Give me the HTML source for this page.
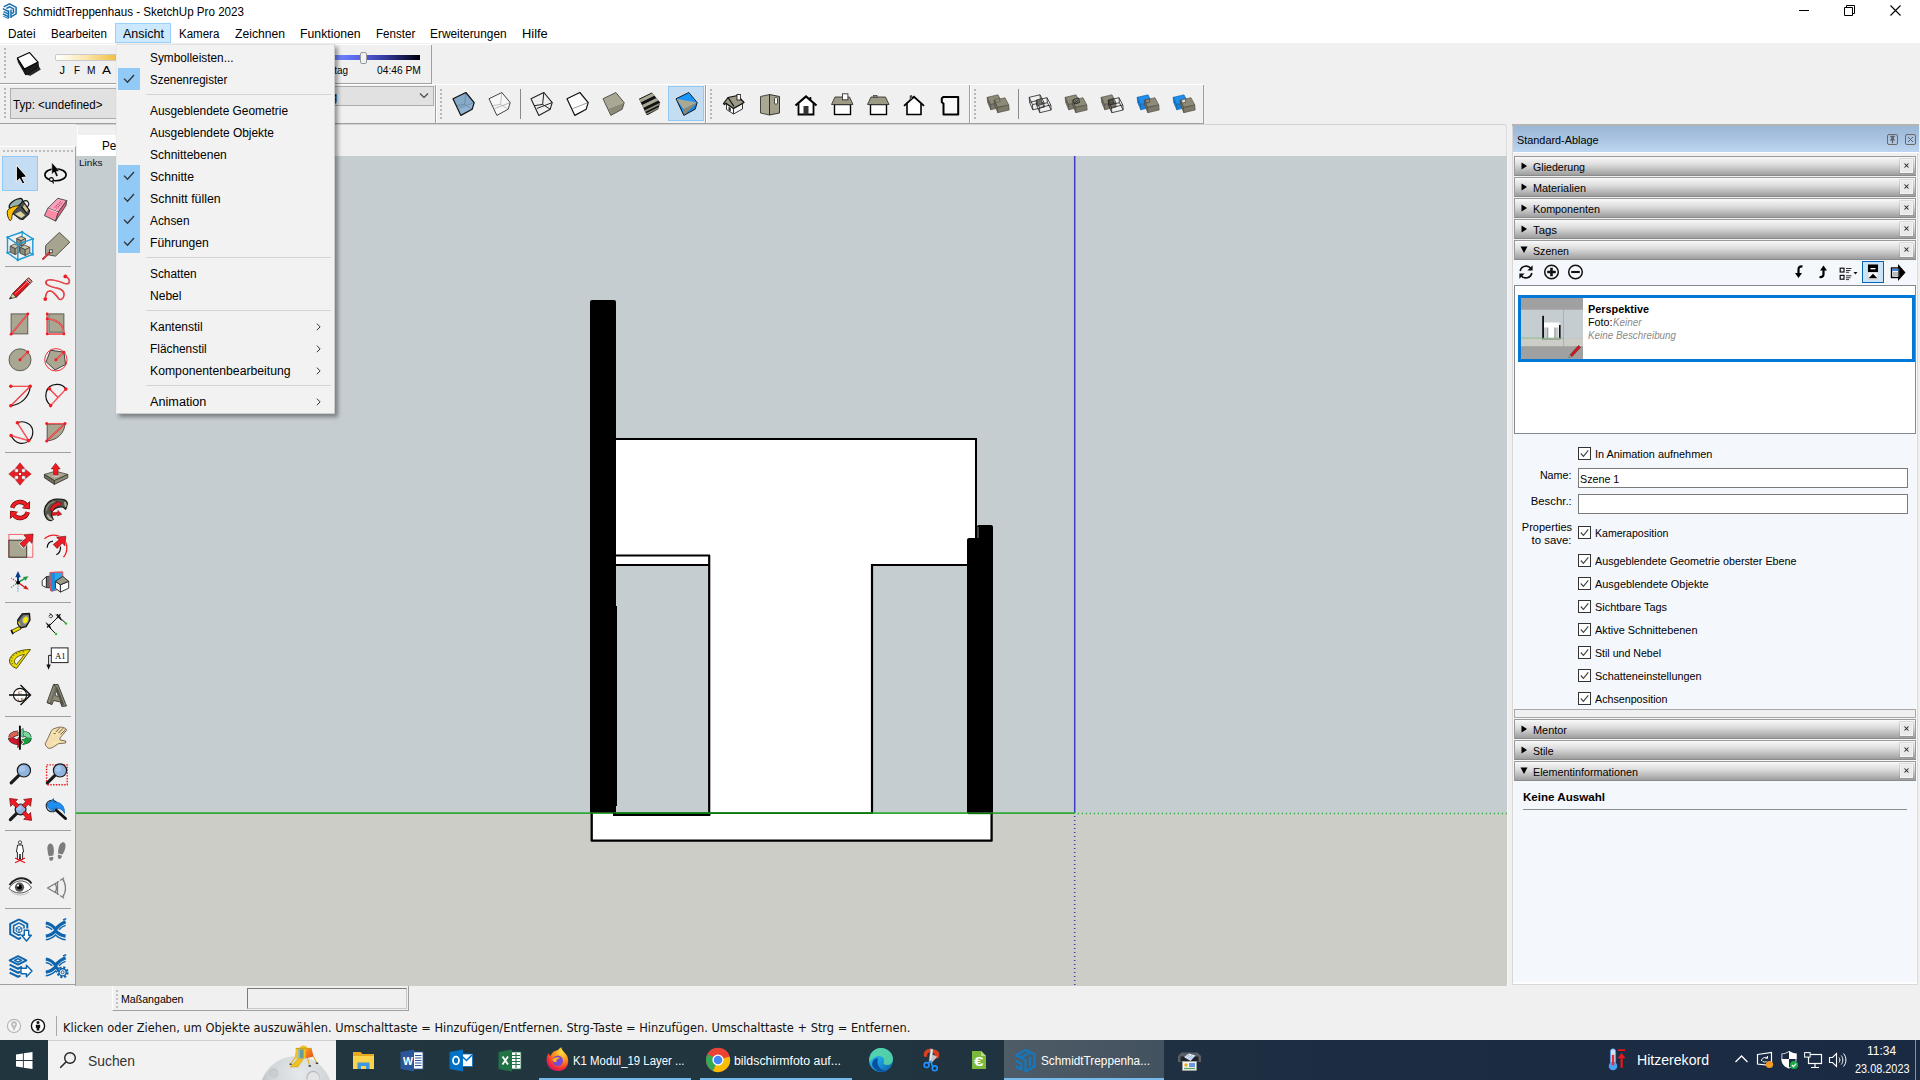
<!DOCTYPE html>
<html lang="de"><head><meta charset="utf-8"><title>SchmidtTreppenhaus - SketchUp Pro 2023</title>
<style>
html,body{margin:0;padding:0;}
body{width:1920px;height:1080px;overflow:hidden;background:#f0f0f0;position:relative;font-family:"Liberation Sans",sans-serif;font-size:12px;color:#000;}
svg{display:block;overflow:visible;}
span{display:block;}
</style></head><body>
<!-- p01_base.py -->
<div style="position:absolute;left:0px;top:0px;width:1920px;height:43px;background:#fff;"></div>
<svg style="position:absolute;left:2.2px;top:2.8px;" width="15" height="16" viewBox="0 0 15 16"><g fill="none" stroke="#1a6fae" stroke-width="1.55" stroke-linejoin="miter">
<path d="M1.7 3.9 L7.5 0.9 L14.1 4.4 V10.9 L9.3 13.7"/><path d="M4.4 5.5 L7.6 3.8 L11.5 5.9 V9.6 L9.6 10.7"/>
<path d="M9 6.6 V15"/><path d="M6.6 7.4 V15.2"/>
<path d="M0.8 5.6 L6.6 8.5"/><path d="M1.6 8.6 L6.6 11.1"/><path d="M0.9 10.9 L6.6 13.8"/><path d="M1.2 13.2 L6.6 15.6" stroke-width="1"/></g></svg>
<span style="position:absolute;top:6.44px;font-size:12px;line-height:12px;white-space:pre;color:#000;font-family:'Liberation Sans',sans-serif;left:22.50px;transform-origin:0 0;transform:scaleX(0.9678);">SchmidtTreppenhaus - SketchUp Pro 2023</span>
<div style="position:absolute;left:1799px;top:10px;width:10px;height:1px;background:#000;"></div>
<svg style="position:absolute;left:1843px;top:4px;" width="13" height="13" viewBox="0 0 13 13"><path d="M1.5 3.5h8v8h-8z M3.5 3.5v-2h8v8h-2" fill="none" stroke="#000" stroke-width="1"/></svg>
<svg style="position:absolute;left:1889px;top:4px;" width="13" height="13" viewBox="0 0 13 13"><path d="M1.5 1.5l10 10M11.5 1.5l-10 10" fill="none" stroke="#000" stroke-width="1.1"/></svg>
<div style="position:absolute;left:115px;top:23px;width:56px;height:20px;background:#cce8ff;box-sizing:border-box;border:1px solid #99d1ff;"></div>
<span style="position:absolute;top:27.94px;font-size:12px;line-height:12px;white-space:pre;color:#000;font-family:'Liberation Sans',sans-serif;left:8.00px;transform-origin:0 0;transform:scaleX(0.9816);">Datei</span>
<span style="position:absolute;top:27.94px;font-size:12px;line-height:12px;white-space:pre;color:#000;font-family:'Liberation Sans',sans-serif;left:51.00px;transform-origin:0 0;transform:scaleX(0.9648);">Bearbeiten</span>
<span style="position:absolute;top:27.94px;font-size:12px;line-height:12px;white-space:pre;color:#000;font-family:'Liberation Sans',sans-serif;left:122.50px;transform-origin:0 0;transform:scaleX(1.0419);">Ansicht</span>
<span style="position:absolute;top:27.94px;font-size:12px;line-height:12px;white-space:pre;color:#000;font-family:'Liberation Sans',sans-serif;left:178.90px;transform-origin:0 0;transform:scaleX(0.9591);">Kamera</span>
<span style="position:absolute;top:27.94px;font-size:12px;line-height:12px;white-space:pre;color:#000;font-family:'Liberation Sans',sans-serif;left:234.50px;transform-origin:0 0;transform:scaleX(1.0128);">Zeichnen</span>
<span style="position:absolute;top:27.94px;font-size:12px;line-height:12px;white-space:pre;color:#000;font-family:'Liberation Sans',sans-serif;left:299.50px;transform-origin:0 0;transform:scaleX(1.0223);">Funktionen</span>
<span style="position:absolute;top:27.94px;font-size:12px;line-height:12px;white-space:pre;color:#000;font-family:'Liberation Sans',sans-serif;left:375.50px;transform-origin:0 0;transform:scaleX(0.9660);">Fenster</span>
<span style="position:absolute;top:27.94px;font-size:12px;line-height:12px;white-space:pre;color:#000;font-family:'Liberation Sans',sans-serif;left:429.50px;transform-origin:0 0;transform:scaleX(0.9912);">Erweiterungen</span>
<span style="position:absolute;top:27.94px;font-size:12px;line-height:12px;white-space:pre;color:#000;font-family:'Liberation Sans',sans-serif;left:521.80px;transform-origin:0 0;transform:scaleX(1.0705);">Hilfe</span>
<!-- p02_toolbars.py -->
<div style="position:absolute;left:0px;top:44px;width:432px;height:1px;background:#fff;"></div>
<div style="position:absolute;left:0px;top:83px;width:432px;height:1px;background:#a0a0a0;"></div>
<div style="position:absolute;left:431px;top:45px;width:1px;height:39px;background:#a0a0a0;"></div>
<svg style="position:absolute;left:4px;top:48px;" width="3" height="32" viewBox="0 0 3 32"><rect x="0" y="0" width="2" height="2" fill="#b8b8b8"/><rect x="0" y="4" width="2" height="2" fill="#b8b8b8"/><rect x="0" y="8" width="2" height="2" fill="#b8b8b8"/><rect x="0" y="12" width="2" height="2" fill="#b8b8b8"/><rect x="0" y="16" width="2" height="2" fill="#b8b8b8"/><rect x="0" y="20" width="2" height="2" fill="#b8b8b8"/><rect x="0" y="24" width="2" height="2" fill="#b8b8b8"/><rect x="0" y="28" width="2" height="2" fill="#b8b8b8"/></svg>
<svg style="position:absolute;left:16px;top:51px;" width="26" height="26" viewBox="0 0 26 26"><polygon points="9.6,23.7 14.4,24.8 24.8,18.6 22.3,14.5" fill="#262626"/><polygon points="8.4,18.2 22.1,11.1 22.6,15.6 9.6,23.9" fill="#1c1c1c" stroke="#000" stroke-width="0.6"/><polygon points="1.2,7.1 8.4,18.2 9.6,23.9 2.4,11.5" fill="#222" stroke="#000" stroke-width="0.6"/><polygon points="1.4,7.1 13.6,1.6 22.0,11.1 8.4,18.1" fill="#fdfdfd" stroke="#000" stroke-width="1.1" stroke-linejoin="round"/></svg>
<div style="position:absolute;left:55px;top:54px;width:120px;height:7px;box-sizing:border-box;border:1px solid #c9c9c9;border-radius:2px;background:linear-gradient(90deg,#ffffff 0%,#fbe7b0 25%,#f6c85a 45%,#f0b020 60%);"></div>
<span style="position:absolute;top:65.29px;font-size:11px;line-height:11px;white-space:pre;color:#000;font-family:'Liberation Sans',sans-serif;left:59.50px;transform-origin:0 0;">J</span>
<span style="position:absolute;top:65.29px;font-size:11px;line-height:11px;white-space:pre;color:#000;font-family:'Liberation Sans',sans-serif;left:73.50px;transform-origin:0 0;transform:scaleX(0.8929);">F</span>
<span style="position:absolute;top:65.29px;font-size:11px;line-height:11px;white-space:pre;color:#000;font-family:'Liberation Sans',sans-serif;left:86.50px;transform-origin:0 0;transform:scaleX(0.9276);">M</span>
<span style="position:absolute;top:65.29px;font-size:11px;line-height:11px;white-space:pre;color:#000;font-family:'Liberation Sans',sans-serif;left:101.50px;transform-origin:0 0;transform:scaleX(1.2266);">A</span>
<div style="position:absolute;left:300px;top:55px;width:120px;height:5px;background:linear-gradient(90deg,#9fb0ff 0%,#6878f8 38%,#5560e0 52%,#3a40a8 68%,#1c1f5c 84%,#000008 100%);"></div>
<div style="position:absolute;left:360px;top:52px;width:7px;height:12px;background:#f2f2f2;box-sizing:border-box;border:1px solid #9a9a9a;border-radius:2px;"></div>
<span style="position:absolute;top:65.29px;font-size:11px;line-height:11px;white-space:pre;color:#000;font-family:'Liberation Sans',sans-serif;left:320.50px;transform-origin:0 0;transform:scaleX(0.9013);">Mittag</span>
<span style="position:absolute;top:65.29px;font-size:11px;line-height:11px;white-space:pre;color:#000;font-family:'Liberation Sans',sans-serif;left:377.10px;transform-origin:0 0;transform:scaleX(0.9302);">04:46 PM</span>
<div style="position:absolute;left:0px;top:84px;width:1204px;height:1px;background:#fff;"></div>
<div style="position:absolute;left:0px;top:123px;width:1204px;height:1px;background:#a0a0a0;"></div>
<svg style="position:absolute;left:4px;top:88px;" width="3" height="32" viewBox="0 0 3 32"><rect x="0" y="0" width="2" height="2" fill="#b8b8b8"/><rect x="0" y="4" width="2" height="2" fill="#b8b8b8"/><rect x="0" y="8" width="2" height="2" fill="#b8b8b8"/><rect x="0" y="12" width="2" height="2" fill="#b8b8b8"/><rect x="0" y="16" width="2" height="2" fill="#b8b8b8"/><rect x="0" y="20" width="2" height="2" fill="#b8b8b8"/><rect x="0" y="24" width="2" height="2" fill="#b8b8b8"/><rect x="0" y="28" width="2" height="2" fill="#b8b8b8"/></svg>
<div style="position:absolute;left:10px;top:88px;width:320px;height:31px;background:#e1e1e1;box-sizing:border-box;border:1px solid #adadad;"></div>
<span style="position:absolute;top:99.14px;font-size:12px;line-height:12px;white-space:pre;color:#000;font-family:'Liberation Sans',sans-serif;left:13.00px;transform-origin:0 0;transform:scaleX(0.9650);">Typ: &lt;undefined&gt;</span>
<div style="position:absolute;left:250px;top:86px;width:184px;height:20px;background:#e1e1e1;box-sizing:border-box;border:1px solid #adadad;"></div>
<span style="position:absolute;top:90.94px;font-size:12px;line-height:12px;white-space:pre;color:#000;font-family:'Liberation Sans',sans-serif;left:330.50px;transform-origin:0 0;">g</span>
<svg style="position:absolute;left:419px;top:92px;" width="10" height="8" viewBox="0 0 10 8"><path d="M1 1.5 L5 5.5 L9 1.5" fill="none" stroke="#444" stroke-width="1.1"/></svg>
<div style="position:absolute;left:435px;top:85px;width:1px;height:38px;background:#a0a0a0;"></div>
<div style="position:absolute;left:705px;top:85px;width:1px;height:38px;background:#a0a0a0;"></div>
<div style="position:absolute;left:969px;top:85px;width:1px;height:38px;background:#a0a0a0;"></div>
<div style="position:absolute;left:1203px;top:85px;width:1px;height:38px;background:#a0a0a0;"></div>
<div style="position:absolute;left:436px;top:85px;width:1px;height:38px;background:#fff;"></div>
<div style="position:absolute;left:706px;top:85px;width:1px;height:38px;background:#fff;"></div>
<div style="position:absolute;left:970px;top:85px;width:1px;height:38px;background:#fff;"></div>
<svg style="position:absolute;left:440px;top:89px;" width="3" height="31" viewBox="0 0 3 31"><rect x="0" y="0" width="2" height="2" fill="#b8b8b8"/><rect x="0" y="4" width="2" height="2" fill="#b8b8b8"/><rect x="0" y="8" width="2" height="2" fill="#b8b8b8"/><rect x="0" y="12" width="2" height="2" fill="#b8b8b8"/><rect x="0" y="16" width="2" height="2" fill="#b8b8b8"/><rect x="0" y="20" width="2" height="2" fill="#b8b8b8"/><rect x="0" y="24" width="2" height="2" fill="#b8b8b8"/><rect x="0" y="28" width="2" height="2" fill="#b8b8b8"/></svg>
<svg style="position:absolute;left:710px;top:89px;" width="3" height="31" viewBox="0 0 3 31"><rect x="0" y="0" width="2" height="2" fill="#b8b8b8"/><rect x="0" y="4" width="2" height="2" fill="#b8b8b8"/><rect x="0" y="8" width="2" height="2" fill="#b8b8b8"/><rect x="0" y="12" width="2" height="2" fill="#b8b8b8"/><rect x="0" y="16" width="2" height="2" fill="#b8b8b8"/><rect x="0" y="20" width="2" height="2" fill="#b8b8b8"/><rect x="0" y="24" width="2" height="2" fill="#b8b8b8"/><rect x="0" y="28" width="2" height="2" fill="#b8b8b8"/></svg>
<svg style="position:absolute;left:974px;top:89px;" width="3" height="31" viewBox="0 0 3 31"><rect x="0" y="0" width="2" height="2" fill="#b8b8b8"/><rect x="0" y="4" width="2" height="2" fill="#b8b8b8"/><rect x="0" y="8" width="2" height="2" fill="#b8b8b8"/><rect x="0" y="12" width="2" height="2" fill="#b8b8b8"/><rect x="0" y="16" width="2" height="2" fill="#b8b8b8"/><rect x="0" y="20" width="2" height="2" fill="#b8b8b8"/><rect x="0" y="24" width="2" height="2" fill="#b8b8b8"/><rect x="0" y="28" width="2" height="2" fill="#b8b8b8"/></svg>
<div style="position:absolute;left:668px;top:86px;width:36px;height:35px;background:#c4ddf3;box-sizing:border-box;border:1px solid #90c8f6;"></div>
<svg style="position:absolute;left:451.4px;top:91px;" width="24" height="24" viewBox="0 0 24 24"><polygon points="2.00,7.75 14.85,1.50 23.20,11.60 21.20,18.20 9.85,24.40" fill="#8fb3d0"/><polygon points="2.00,7.75 14.85,1.50 23.20,11.60 7.80,17.50" fill="#86aac8"/><path d="M14.85,1.50 L13.60,13.40 L21.20,18.20 M13.60,13.40 L5.40,14.70" stroke="#5d7f9c" stroke-width="0.7" fill="none"/><path d="M7.80,17.50 L23.20,11.60" stroke="#6d8fab" stroke-width="0.8" fill="none"/><polygon points="2.00,7.75 14.85,1.50 23.20,11.60 21.20,18.20 9.85,24.40" fill="none" stroke="#111" stroke-width="1.2" stroke-linejoin="round"/></svg>
<svg style="position:absolute;left:487.4px;top:91px;" width="24" height="24" viewBox="0 0 24 24"><polygon points="2.00,7.75 14.85,1.50 23.20,11.60 21.20,18.20 9.85,24.40" fill="#f7f7f7"/><path d="M14.85,1.50 L13.60,13.40 L21.20,18.20 M13.60,13.40 L5.40,14.70" stroke="#aaa" stroke-width="0.7" fill="none"/><path d="M7.80,17.50 L23.20,11.60" stroke="#999" stroke-width="0.7" fill="none"/><polygon points="2.00,7.75 14.85,1.50 23.20,11.60 21.20,18.20 9.85,24.40" fill="none" stroke="#444" stroke-width="1" stroke-linejoin="round"/></svg>
<svg style="position:absolute;left:529.3px;top:91px;" width="24" height="24" viewBox="0 0 24 24"><path d="M14.85,1.50 L13.60,13.40 L21.20,18.20 M13.60,13.40 L5.40,14.70" stroke="#222" stroke-width="1" fill="none"/><path d="M7.80,17.50 L23.20,11.60" stroke="#222" stroke-width="1" fill="none"/><polygon points="2.00,7.75 14.85,1.50 23.20,11.60 21.20,18.20 9.85,24.40" fill="none" stroke="#222" stroke-width="1.1" stroke-linejoin="round"/></svg>
<svg style="position:absolute;left:565.3px;top:91px;" width="24" height="24" viewBox="0 0 24 24"><polygon points="2.00,7.75 14.85,1.50 23.20,11.60 21.20,18.20 9.85,24.40" fill="#fdfdfd"/><path d="M7.80,17.50 L23.20,11.60" stroke="#888" stroke-width="0.8" fill="none"/><polygon points="2.00,7.75 14.85,1.50 23.20,11.60 21.20,18.20 9.85,24.40" fill="none" stroke="#111" stroke-width="1.2" stroke-linejoin="round"/></svg>
<svg style="position:absolute;left:601.3px;top:91px;" width="24" height="24" viewBox="0 0 24 24"><polygon points="2.00,7.75 14.85,1.50 23.20,11.60 7.80,17.50" fill="#aaa794"/><polygon points="2.00,7.75 7.80,17.50 9.85,24.40" fill="#8d8a78"/><polygon points="7.80,17.50 23.20,11.60 21.20,18.20 9.85,24.40" fill="#8d8a78"/><polygon points="2.00,7.75 14.85,1.50 23.20,11.60 21.20,18.20 9.85,24.40" fill="none" stroke="#4a483f" stroke-width="0.9" stroke-linejoin="round"/></svg>
<svg style="position:absolute;left:637.3px;top:91px;" width="24" height="24" viewBox="0 0 24 24"><clipPath id="cubeclip"><polygon points="2.00,7.75 14.85,1.50 23.20,11.60 21.20,18.20 9.85,24.40"/></clipPath><g clip-path="url(#cubeclip)"><rect x="0" y="0" width="24" height="24" fill="#111"/><g transform="rotate(-26 12 12)"><rect x="-4" y="4.600" width="32" height="3.200" fill="#aaa794"/><rect x="-4" y="10.800" width="32" height="3.200" fill="#aaa794"/><rect x="-4" y="16.600" width="32" height="1.700" fill="#8d8a78"/><rect x="-4" y="20" width="32" height="1.300" fill="#8d8a78"/></g></g></svg>
<svg style="position:absolute;left:673.6px;top:91px;" width="24" height="24" viewBox="0 0 24 24"><polygon points="2.00,7.75 14.85,1.50 23.20,11.60 21.20,18.20 9.85,24.40" fill="#1a96fa"/><polygon points="2.00,7.75 7.80,17.50 9.85,24.40" fill="#1672c4"/><polygon points="23.20,11.60 21.20,18.20 9.85,24.40" fill="#1784e0"/><polygon points="2.00,7.75 23.20,11.60 9.70,18.20" fill="#aaa892"/><polygon points="9.70,18.20 23.20,11.60 9.85,24.40" fill="#8b8976"/><polygon points="2.00,7.75 14.85,1.50 23.20,11.60 21.20,18.20 9.85,24.40" fill="none" stroke="#111" stroke-width="0.9" stroke-linejoin="round"/></svg>
<div style="position:absolute;left:520px;top:89px;width:1px;height:30px;background:#8a8a8a;"></div>
<svg style="position:absolute;left:722.3px;top:92.5px;" width="24" height="24" viewBox="0 0 24 24"><polygon points="4.5,11 11.5,15.5 11.5,21 4.5,16.5" fill="#fff" stroke="#222" stroke-width="0.9"/>
<polygon points="11.5,15.5 20.5,10.5 20.5,16 11.5,21" fill="#f4f4f4" stroke="#222" stroke-width="0.9"/>
<polygon points="6.5,13.5 8.8,15 8.8,18.6 6.5,17.2" fill="#333"/>
<polygon points="1.5,10.5 6,4.5 15.5,2.5 22,9.5 11.5,15.5 4,10.2 2.5,11.6" fill="#9c9985" stroke="#111" stroke-width="1.2" stroke-linejoin="round"/>
<path d="M6 4.5 L12 13.5" stroke="#111" stroke-width="1.3"/>
<rect x="15" y="1.5" width="3.4" height="5.5" fill="#fff" stroke="#222" stroke-width="0.9"/></svg>
<svg style="position:absolute;left:758.3px;top:92.5px;" width="24" height="24" viewBox="0 0 24 24"><polygon points="2.5,3.5 11.5,1.5 11.5,22 2.5,20" fill="#aaa794" stroke="#3a3930" stroke-width="0.9"/><polygon points="11.5,1.5 21.5,3.5 21.5,20 11.5,22" fill="#a29f8b" stroke="#222" stroke-width="0.9"/><rect x="16.5" y="4.5" width="3" height="6.5" rx="1" fill="#fff" stroke="#333" stroke-width="0.9"/></svg>
<svg style="position:absolute;left:794px;top:92.5px;" width="24" height="24" viewBox="0 0 24 24"><polygon points="5,11 12,5 19,11 19,21.5 5,21.5" fill="#fff"/><path d="M1.5 12.5 L12 3.5 L22.5 12.5" fill="none" stroke="#000" stroke-width="2.2" stroke-linejoin="miter"/><path d="M4.5 10.5 V21.5 H19.5 V10.5" fill="none" stroke="#000" stroke-width="1.8"/><rect x="9.5" y="13" width="5" height="8.5" fill="#333"/><rect x="15.5" y="4" width="1.8" height="3" fill="#000"/></svg>
<svg style="position:absolute;left:830px;top:92.5px;" width="24" height="24" viewBox="0 0 24 24"><rect x="4.5" y="11.5" width="16" height="10" fill="#fff" stroke="#000" stroke-width="1.4"/><polygon points="1.5,11.5 5,4 19.5,4 23,11.5" fill="#9c9985" stroke="#333" stroke-width="0.9"/><rect x="12.5" y="0.8" width="5.4" height="6" fill="#fff" stroke="#333" stroke-width="0.9"/></svg>
<svg style="position:absolute;left:865.8px;top:92.5px;" width="24" height="24" viewBox="0 0 24 24"><rect x="4.5" y="11.5" width="16" height="10" fill="#fff" stroke="#000" stroke-width="1.4"/><polygon points="1.5,11.5 5,4 19.5,4 23,11.5" fill="#9c9985" stroke="#333" stroke-width="0.9"/><rect x="7.5" y="2.6" width="3.5" height="1.6" fill="#9c9985" stroke="#333" stroke-width="0.7"/></svg>
<svg style="position:absolute;left:901.8px;top:92.5px;" width="24" height="24" viewBox="0 0 24 24"><polygon points="5,11.5 12,5 19,11.5 19,21.5 5,21.5" fill="#fff"/><path d="M2 12.8 L12 3.8 L22 12.8" fill="none" stroke="#000" stroke-width="1.8"/><path d="M5 10.5 V21.5 H19 V10.5" fill="none" stroke="#000" stroke-width="1.6"/><path d="M8.3 6.5 V2.8 H9.8 V5.5" fill="#fff" stroke="#000" stroke-width="0.9"/></svg>
<svg style="position:absolute;left:937.5px;top:92.5px;" width="24" height="24" viewBox="0 0 24 24"><path d="M5.5 3.9 H20.2 V21.4 H5.5 V10.5 L3.8 9.3 V5.2 Z" fill="#f8f8f8" stroke="#000" stroke-width="2" stroke-linejoin="round"/></svg>
<div style="position:absolute;left:1018px;top:89px;width:1px;height:30px;background:#8a8a8a;"></div>
<svg style="position:absolute;left:986px;top:91.8px;" width="24" height="24" viewBox="0 0 24 24"><polygon points="1.2,5.3 12.0,2.8 15.799999999999999,10.1 4.5,12.600000000000001" fill="#8d8a78" stroke="#4a483f" stroke-width="0.6" stroke-linejoin="round"/><polygon points="1.2,5.3 4.5,12.600000000000001 4.8,17.8 1.6,10.3" fill="#6f6d5f" stroke="#4a483f" stroke-width="0.6" stroke-linejoin="round"/><polygon points="4.5,12.600000000000001 15.799999999999999,10.1 16.2,15.100000000000001 4.8,17.8" fill="#7d7a6a" stroke="#4a483f" stroke-width="0.6" stroke-linejoin="round"/><polygon points="8.2,8.2 19.0,5.7 22.799999999999997,13.0 11.5,15.5" fill="#8d8a78" stroke="#4a483f" stroke-width="0.6" stroke-linejoin="round"/><polygon points="8.2,8.2 11.5,15.5 11.799999999999999,20.7 8.6,13.2" fill="#6f6d5f" stroke="#4a483f" stroke-width="0.6" stroke-linejoin="round"/><polygon points="11.5,15.5 22.799999999999997,13.0 23.2,18.0 11.799999999999999,20.7" fill="#7d7a6a" stroke="#4a483f" stroke-width="0.6" stroke-linejoin="round"/><polygon points="9,7.5 13,6.2 14.2,9.5 10.2,10.8" fill="#8d8a78" stroke="#55534a" stroke-width="0.5"/></svg>
<svg style="position:absolute;left:1028.3px;top:91.8px;" width="24" height="24" viewBox="0 0 24 24"><path d="M1.2,5.3 L12.0,2.8 L15.799999999999999,10.1 L4.5,12.600000000000001 Z M1.2,5.3 L1.6,10.3 L4.8,17.8 L4.5,12.600000000000001 M4.8,17.8 L16.2,15.100000000000001 L15.799999999999999,10.1 M12.0,2.8 L12.399999999999999,7.8 L16.2,15.100000000000001 M12.399999999999999,7.8 L1.6,10.3" fill="none" stroke="#222" stroke-width="0.8"/><path d="M8.2,8.2 L19.0,5.7 L22.799999999999997,13.0 L11.5,15.5 Z M8.2,8.2 L8.6,13.2 L11.799999999999999,20.7 L11.5,15.5 M11.799999999999999,20.7 L23.2,18.0 L22.799999999999997,13.0 M19.0,5.7 L19.4,10.7 L23.2,18.0 M19.4,10.7 L8.6,13.2" fill="none" stroke="#222" stroke-width="0.8"/><polygon points="8.8,8 13.4,6.5 14,12.5 9.6,14" fill="#6f6d5f" stroke="#333" stroke-width="0.6"/></svg>
<svg style="position:absolute;left:1063.5px;top:91.8px;" width="24" height="24" viewBox="0 0 24 24"><polygon points="1.2,5.3 12.0,2.8 15.799999999999999,10.1 4.5,12.600000000000001" fill="#8d8a78" stroke="#4a483f" stroke-width="0.6" stroke-linejoin="round"/><polygon points="1.2,5.3 4.5,12.600000000000001 4.8,17.8 1.6,10.3" fill="#6f6d5f" stroke="#4a483f" stroke-width="0.6" stroke-linejoin="round"/><polygon points="4.5,12.600000000000001 15.799999999999999,10.1 16.2,15.100000000000001 4.8,17.8" fill="#7d7a6a" stroke="#4a483f" stroke-width="0.6" stroke-linejoin="round"/><polygon points="8.2,8.2 19.0,5.7 22.799999999999997,13.0 11.5,15.5" fill="#8d8a78" stroke="#4a483f" stroke-width="0.6" stroke-linejoin="round"/><polygon points="8.2,8.2 11.5,15.5 11.799999999999999,20.7 8.6,13.2" fill="#6f6d5f" stroke="#4a483f" stroke-width="0.6" stroke-linejoin="round"/><polygon points="11.5,15.5 22.799999999999997,13.0 23.2,18.0 11.799999999999999,20.7" fill="#7d7a6a" stroke="#4a483f" stroke-width="0.6" stroke-linejoin="round"/><polygon points="9.5,7.5 14.5,6 15.5,10.5 10.5,12" fill="#8d8a78" stroke="#222" stroke-width="0.9"/><path d="M11 8.5 l3 2 M14 8 l-3 3" stroke="#222" stroke-width="0.8"/></svg>
<svg style="position:absolute;left:1100px;top:91.8px;" width="24" height="24" viewBox="0 0 24 24"><polygon points="1.2,5.3 12.0,2.8 15.799999999999999,10.1 4.5,12.600000000000001" fill="#8d8a78" stroke="#4a483f" stroke-width="0.6" stroke-linejoin="round"/><polygon points="1.2,5.3 4.5,12.600000000000001 4.8,17.8 1.6,10.3" fill="#6f6d5f" stroke="#4a483f" stroke-width="0.6" stroke-linejoin="round"/><polygon points="4.5,12.600000000000001 15.799999999999999,10.1 16.2,15.100000000000001 4.8,17.8" fill="#7d7a6a" stroke="#4a483f" stroke-width="0.6" stroke-linejoin="round"/><path d="M8.2,8.2 L19.0,5.7 L22.799999999999997,13.0 L11.5,15.5 Z M8.2,8.2 L8.6,13.2 L11.799999999999999,20.7 L11.5,15.5 M11.799999999999999,20.7 L23.2,18.0 L22.799999999999997,13.0 M19.0,5.7 L19.4,10.7 L23.2,18.0 M19.4,10.7 L8.6,13.2" fill="none" stroke="#222" stroke-width="0.8"/><polygon points="8.8,8 13,6.7 13.6,11.5 9.4,13" fill="#555348" stroke="#222" stroke-width="0.6"/></svg>
<svg style="position:absolute;left:1135.8px;top:91.8px;" width="24" height="24" viewBox="0 0 24 24"><polygon points="1.2,5.3 12.0,2.8 15.799999999999999,10.1 4.5,12.600000000000001" fill="#1e8ef0" stroke="#0d5ea8" stroke-width="0.6" stroke-linejoin="round"/><polygon points="1.2,5.3 4.5,12.600000000000001 4.8,17.8 1.6,10.3" fill="#1678cc" stroke="#0d5ea8" stroke-width="0.6" stroke-linejoin="round"/><polygon points="4.5,12.600000000000001 15.799999999999999,10.1 16.2,15.100000000000001 4.8,17.8" fill="#1a82dd" stroke="#0d5ea8" stroke-width="0.6" stroke-linejoin="round"/><polygon points="8.2,8.2 19.0,5.7 22.799999999999997,13.0 11.5,15.5" fill="#8d8a78" stroke="#4a483f" stroke-width="0.6" stroke-linejoin="round"/><polygon points="8.2,8.2 11.5,15.5 11.799999999999999,20.7 8.6,13.2" fill="#6f6d5f" stroke="#4a483f" stroke-width="0.6" stroke-linejoin="round"/><polygon points="11.5,15.5 22.799999999999997,13.0 23.2,18.0 11.799999999999999,20.7" fill="#7d7a6a" stroke="#4a483f" stroke-width="0.6" stroke-linejoin="round"/><polygon points="9.3,8 13,6.8 14,10 10.3,11.2" fill="#8d8a78" stroke="#444" stroke-width="0.7"/></svg>
<svg style="position:absolute;left:1171.8px;top:91.8px;" width="24" height="24" viewBox="0 0 24 24"><polygon points="1.2,5.3 12.0,2.8 15.799999999999999,10.1 4.5,12.600000000000001" fill="#1e8ef0" stroke="#0d5ea8" stroke-width="0.6" stroke-linejoin="round"/><polygon points="1.2,5.3 4.5,12.600000000000001 4.8,17.8 1.6,10.3" fill="#1678cc" stroke="#0d5ea8" stroke-width="0.6" stroke-linejoin="round"/><polygon points="4.5,12.600000000000001 15.799999999999999,10.1 16.2,15.100000000000001 4.8,17.8" fill="#1a82dd" stroke="#0d5ea8" stroke-width="0.6" stroke-linejoin="round"/><polygon points="8.2,8.2 19.0,5.7 22.799999999999997,13.0 11.5,15.5" fill="#8d8a78" stroke="#4a483f" stroke-width="0.6" stroke-linejoin="round"/><polygon points="8.2,8.2 11.5,15.5 11.799999999999999,20.7 8.6,13.2" fill="#6f6d5f" stroke="#4a483f" stroke-width="0.6" stroke-linejoin="round"/><polygon points="11.5,15.5 22.799999999999997,13.0 23.2,18.0 11.799999999999999,20.7" fill="#7d7a6a" stroke="#4a483f" stroke-width="0.6" stroke-linejoin="round"/><polygon points="9.3,8 13,6.8 14,10 10.3,11.2" fill="#ddd" stroke="#444" stroke-width="0.7"/></svg>
<!-- p03_lefttools.py -->
<div style="position:absolute;left:0px;top:146px;width:76px;height:839px;background:#f0f0f0;box-sizing:border-box;border-top:1px solid #fff;border-right:1px solid #a0a0a0;border-bottom:1px solid #a0a0a0;"></div>
<svg style="position:absolute;left:3px;top:150px;" width="70" height="3" viewBox="0 0 70 3"><rect x="0" y="0" width="2" height="2" fill="#bcbcbc"/><rect x="4" y="0" width="2" height="2" fill="#bcbcbc"/><rect x="8" y="0" width="2" height="2" fill="#bcbcbc"/><rect x="12" y="0" width="2" height="2" fill="#bcbcbc"/><rect x="16" y="0" width="2" height="2" fill="#bcbcbc"/><rect x="20" y="0" width="2" height="2" fill="#bcbcbc"/><rect x="24" y="0" width="2" height="2" fill="#bcbcbc"/><rect x="28" y="0" width="2" height="2" fill="#bcbcbc"/><rect x="32" y="0" width="2" height="2" fill="#bcbcbc"/><rect x="36" y="0" width="2" height="2" fill="#bcbcbc"/><rect x="40" y="0" width="2" height="2" fill="#bcbcbc"/><rect x="44" y="0" width="2" height="2" fill="#bcbcbc"/><rect x="48" y="0" width="2" height="2" fill="#bcbcbc"/><rect x="52" y="0" width="2" height="2" fill="#bcbcbc"/><rect x="56" y="0" width="2" height="2" fill="#bcbcbc"/><rect x="60" y="0" width="2" height="2" fill="#bcbcbc"/><rect x="64" y="0" width="2" height="2" fill="#bcbcbc"/><rect x="68" y="0" width="2" height="2" fill="#bcbcbc"/></svg>
<div style="position:absolute;left:2px;top:156px;width:36px;height:35px;background:#c4ddf3;box-sizing:border-box;border:1px solid #90c8f6;"></div>
<div style="position:absolute;left:5px;top:266px;width:66px;height:1px;background:#a0a0a0;"></div>
<div style="position:absolute;left:5px;top:452px;width:66px;height:1px;background:#a0a0a0;"></div>
<div style="position:absolute;left:5px;top:602px;width:66px;height:1px;background:#a0a0a0;"></div>
<div style="position:absolute;left:5px;top:716px;width:66px;height:1px;background:#a0a0a0;"></div>
<div style="position:absolute;left:5px;top:830px;width:66px;height:1px;background:#a0a0a0;"></div>
<div style="position:absolute;left:5px;top:908px;width:66px;height:1px;background:#a0a0a0;"></div>
<svg style="position:absolute;left:8px;top:162px;" width="24" height="24" viewBox="0 0 24 24"><path d="M8.4 3 V19.8 L11.6 16.6 L14.6 22 L16.8 20.8 L13.9 15.6 L18.8 14.8 Z" fill="#000" stroke="#fff" stroke-width="0.9" stroke-linejoin="round"/></svg>
<svg style="position:absolute;left:44px;top:162px;" width="24" height="24" viewBox="0 0 24 24"><ellipse cx="11.5" cy="12.7" rx="10.6" ry="6" fill="none" stroke="#000" stroke-width="1.6"/><path d="M8.2 18.8 L9.6 21.6" stroke="#000" stroke-width="1.2"/><circle cx="7.4" cy="17.5" r="1.9" fill="#f0f0f0" stroke="#000" stroke-width="1.1"/><path d="M7.8 0.6 V12.4 L10.2 10 L12.2 14.6 L14.2 13.8 L12.3 9.4 L15.4 9 Z" fill="#000" stroke="#f0f0f0" stroke-width="0.5"/></svg>
<svg style="position:absolute;left:8px;top:198px;" width="24" height="24" viewBox="0 0 24 24"><path d="M14.100 1.900 L21.600 12.600 L20.700 16.100 L14.700 21.500 L11.800 20.900 L5.900 16.400 L1.100 9.900 Z" fill="#4c5054" stroke="#15181a" stroke-width="1.100" stroke-linejoin="round"/>
<polygon points="7,16.100 12.400,13.200 17.100,17.300 13.300,20" fill="#dcd49c"/><polygon points="14.700,9 16.500,6.400 20.100,11.400 18.600,14.400" fill="#cfc48c"/><path d="M13.200 8.500 L19.200 15.800" stroke="#15181a" stroke-width="1.200"/>
<ellipse cx="7.900" cy="5.400" rx="7.600" ry="3.400" transform="rotate(-31 7.900 5.400)" fill="#94b0a8" stroke="#15181a" stroke-width="1.300"/>
<path d="M15.300 3.700 C16.500 2.300 18.800 2.200 20 3.800 C21.200 5.400 20.600 7.600 19.200 9" fill="none" stroke="#15181a" stroke-width="1.100"/>
<path d="M11.200 7.900 C7 7.600 1.500 9.500 -0.500 12.600 C-1.500 15.500 0 20.500 2 22.700 C3 22.400 3.600 21.400 3.800 20.300 C3.800 18 4.300 16 5.300 14.400 C6.500 12.300 8.500 10.300 10.600 9 Z" fill="#ffc000" stroke="#2a2410" stroke-width="0.900" stroke-linejoin="round"/></svg>
<svg style="position:absolute;left:44px;top:198px;" width="24" height="24" viewBox="0 0 24 24"><polygon points="3.8,10.3 13.8,0.3 22.7,2.600 14.300,14.200" fill="#f8a4bc" stroke="#444" stroke-width="0.9" stroke-linejoin="round"/><polygon points="0.4,17.600 3.800,10.300 14.300,14.200 11.600,23.100" fill="#fb8aa6" stroke="#444" stroke-width="0.9" stroke-linejoin="round"/><polygon points="14.300,14.200 22.700,2.600 22,7.500 11.600,23.100" fill="#e0607e" stroke="#444" stroke-width="0.9" stroke-linejoin="round"/><path d="M4.2 10.800 L14 14.500" stroke="#fde0e8" stroke-width="0.9"/><path d="M10.500 9.500 L17 3.500 M12.500 10.500 L18.500 4.500" stroke="#c2406e" stroke-width="1.100" stroke-dasharray="1.200 0.800"/></svg>
<svg style="position:absolute;left:8px;top:234px;" width="24" height="24" viewBox="0 0 24 24"><g stroke="#1c9ad6" stroke-width="1.200" fill="none"><path d="M14.200 -2 V13.800 L-0.500 18.800 M14.200 13.800 L24.800 20.400"/></g>
<g stroke="#444" stroke-width="0.8" stroke-linejoin="round"><polygon points="8.7,4.600 13,2.400 17.500,4.400 13.200,6.800" fill="#c8c4a8"/><polygon points="8.700,4.600 13.200,6.800 13.200,11.800 8.700,9.600" fill="#8d8a78"/><polygon points="13.200,6.800 17.500,4.400 17.500,9.400 13.200,11.800" fill="#aaa794"/>
<polygon points="2.200,12.200 6.500,10 11.500,12.200 7.200,14.600" fill="#c8c4a8"/><polygon points="2.200,12.200 7.200,14.600 7.200,20.600 2.200,18.200" fill="#8d8a78"/><polygon points="7.200,14.600 11.500,12.200 11.500,18.200 7.200,20.600" fill="#aaa794"/>
<polygon points="12,13.300 16.500,11.100 21.800,13.300 17.200,15.700" fill="#c8c4a8"/><polygon points="12,13.300 17.200,15.700 17.200,21.500 12,19.200" fill="#8d8a78"/><polygon points="17.200,15.700 21.800,13.300 21.800,19.200 17.200,21.500" fill="#aaa794"/></g>
<g stroke="#1c9ad6" stroke-width="1.4" fill="none" stroke-linejoin="round"><path d="M-0.500 3.200 L14.200 -2 L24.800 4.900 L24.800 20.400 L9.800 26 L-0.500 18.800 Z M-0.500 3.200 L9.800 10.400 L24.800 4.900 M9.800 10.400 V26"/></g>
<g fill="#1c9ad6"><circle cx="14.200" cy="-2" r="1.200"/><circle cx="-0.500" cy="3.200" r="1.200"/><circle cx="24.800" cy="4.900" r="1.200"/><circle cx="-0.500" cy="18.800" r="1.200"/><circle cx="9.800" cy="26" r="1.200"/><circle cx="24.800" cy="20.400" r="1.200"/></g></svg>
<svg style="position:absolute;left:44px;top:234px;" width="24" height="24" viewBox="0 0 24 24"><polygon points="1.600,11.600 15.400,-1.600 25.800,8.200 11.600,22.100 1.600,20.400" fill="#a6a38f" stroke="#55534a" stroke-width="1" stroke-linejoin="round"/><path d="M6.500 17.700 L-0.900 24.900" stroke="#c0141a" stroke-width="2" stroke-linecap="round"/><path d="M5.500 18.700 L0 24" stroke="#f08a8a" stroke-width="0.500"/><rect x="5.500" y="15.900" width="2.800" height="2.800" fill="#fff" stroke="#333" stroke-width="0.8"/></svg>
<svg style="position:absolute;left:8px;top:276px;" width="24" height="24" viewBox="0 0 24 24"><polygon points="4.600,17.600 18.500,3.800 22.200,7.300 8.200,21.300" fill="#e8141c" stroke="#3a0a0c" stroke-width="0.900"/><path d="M7 17.800 L19.500 5.800" stroke="#ff9a9a" stroke-width="0.900"/><polygon points="18.500,3.800 20.500,1.800 24.200,5.300 22.200,7.300" fill="#e89898" stroke="#3a0a0c" stroke-width="0.900"/><path d="M18 4.300 L21.700 7.800" stroke="#ddd" stroke-width="1"/><polygon points="4.600,17.600 8.200,21.300 1.400,22.900" fill="#d8cfa0" stroke="#333" stroke-width="0.700"/><polygon points="3,20.700 4.200,22.200 1.200,23" fill="#111"/></svg>
<svg style="position:absolute;left:44px;top:276px;" width="24" height="24" viewBox="0 0 24 24"><path d="M21.3 0.4 C24 1.5 26.5 4 25 7 C23.5 9.500 19 6.500 13.800 5.100 C9 3.800 4 2.500 2 5.500 C0.500 8.500 6 10.500 13.800 12.300 C18 13.500 20.500 16 20 19.500 C19.500 23 16.500 24.500 14.500 22.500 C12.500 20 10.500 16 6.500 15 C3.500 14.500 1.500 17 1.300 23.100" fill="none" stroke="#d8141c" stroke-width="1.500" stroke-linecap="round"/><path d="M21.3 0.4 C24 1.5 26.5 4 25 7 C23.5 9.500 19 6.500 13.800 5.100 C9 3.800 4 2.500 2 5.500 C0.500 8.500 6 10.500 13.800 12.300 C18 13.500 20.500 16 20 19.500 C19.500 23 16.500 24.500 14.500 22.500 C12.500 20 10.500 16 6.500 15 C3.500 14.500 1.500 17 1.300 23.100" fill="none" stroke="#ffb0b0" stroke-width="0.400"/><circle cx="21.3" cy="0.4" r="1.9" fill="#ee1c24"/><circle cx="1.3" cy="23.1" r="1.9" fill="#ee1c24"/></svg>
<svg style="position:absolute;left:8px;top:312px;" width="24" height="24" viewBox="0 0 24 24"><rect x="3.1" y="1.9" width="16.700" height="20" fill="#a9a691" stroke="#55534a" stroke-width="0.900"/><path d="M3.1 22.2 L19.8 1.9" fill="none" stroke="#ee1c24" stroke-width="1.5"/><path d="M3.1 22.2 L19.8 1.9" fill="none" stroke="#ffc8c8" stroke-width="0.44999999999999996"/><circle cx="3.1" cy="22.2" r="1.4" fill="#ee1c24"/><circle cx="19.8" cy="1.9" r="1.4" fill="#ee1c24"/></svg>
<svg style="position:absolute;left:44px;top:312px;" width="24" height="24" viewBox="0 0 24 24"><rect x="4.9" y="1.9" width="15" height="18.300" fill="#a9a691" stroke="#55534a" stroke-width="0.900"/><path d="M3.2 1.9 V21.9 H19.9" fill="none" stroke="#ee1c24" stroke-width="1.5"/><path d="M3.2 1.9 V21.9 H19.9" fill="none" stroke="#ffc8c8" stroke-width="0.44999999999999996"/><path d="M3.2 6.9 C12.5 6.9 19.9 12.500 19.9 21.900" fill="none" stroke="#ee1c24" stroke-width="1.5"/><path d="M3.2 6.9 C12.5 6.9 19.9 12.500 19.9 21.900" fill="none" stroke="#ffc8c8" stroke-width="0.44999999999999996"/><circle cx="3.2" cy="1.9" r="1.4" fill="#ee1c24"/><circle cx="3.2" cy="6.9" r="1.4" fill="#ee1c24"/><circle cx="3.2" cy="21.9" r="1.4" fill="#ee1c24"/><circle cx="19.9" cy="21.9" r="1.4" fill="#ee1c24"/></svg>
<svg style="position:absolute;left:8px;top:348px;" width="24" height="24" viewBox="0 0 24 24"><circle cx="12" cy="11.800" r="11" fill="#a9a691" stroke="#55534a" stroke-width="0.900"/><path d="M12 11.800 L19.800 4" fill="none" stroke="#ee1c24" stroke-width="1.5"/><path d="M12 11.800 L19.800 4" fill="none" stroke="#ffc8c8" stroke-width="0.44999999999999996"/><circle cx="12" cy="11.8" r="1.5" fill="#ee1c24"/><circle cx="19.8" cy="4" r="1.4" fill="#ee1c24"/></svg>
<svg style="position:absolute;left:44px;top:348px;" width="24" height="24" viewBox="0 0 24 24"><polygon points="19.900,4.200 21.600,16.400 11,22 2.100,13.700 6.600,2.200" fill="#a9a691" stroke="#333" stroke-width="0.900"/><circle cx="11.900" cy="11.800" r="11.200" fill="none" stroke="#ee1c24" stroke-width="0.900"/><path d="M11.900 11.800 L19.900 4.200" fill="none" stroke="#ee1c24" stroke-width="1.5"/><path d="M11.900 11.800 L19.900 4.200" fill="none" stroke="#ffc8c8" stroke-width="0.44999999999999996"/><circle cx="11.9" cy="11.8" r="1.5" fill="#ee1c24"/><circle cx="19.9" cy="4.2" r="1.4" fill="#ee1c24"/></svg>
<svg style="position:absolute;left:8px;top:384px;" width="24" height="24" viewBox="0 0 24 24"><path d="M22.2 2.3 C21.5 13 13 20.500 2.800 21.800" fill="none" stroke="#111" stroke-width="1.200"/><path d="M2.8 2.3 H22.2 L2.8 21.8" fill="none" stroke="#ee1c24" stroke-width="1.3"/><path d="M2.8 2.3 H22.2 L2.8 21.8" fill="none" stroke="#ffc8c8" stroke-width="0.39"/><circle cx="2.8" cy="2.3" r="1.8" fill="#ee1c24"/><circle cx="22.2" cy="2.3" r="1.8" fill="#ee1c24"/><circle cx="2.8" cy="21.8" r="1.8" fill="#ee1c24"/></svg>
<svg style="position:absolute;left:44px;top:384px;" width="24" height="24" viewBox="0 0 24 24"><path d="M6.6 21.6 C-1.500 14 1 0.800 12.700 0.400 C16.500 0.300 20 2 21.800 5.100" fill="none" stroke="#111" stroke-width="1.200"/><path d="M21.8 5.1 L6.6 21.6 M5.4 4.7 L13.8 13.2" fill="none" stroke="#ee1c24" stroke-width="1.3"/><path d="M21.8 5.1 L6.6 21.6 M5.4 4.7 L13.8 13.2" fill="none" stroke="#ffc8c8" stroke-width="0.39"/><circle cx="5.4" cy="4.7" r="1.8" fill="#ee1c24"/><circle cx="21.8" cy="5.1" r="1.8" fill="#ee1c24"/><circle cx="6.6" cy="21.6" r="1.8" fill="#ee1c24"/></svg>
<svg style="position:absolute;left:8px;top:420px;" width="24" height="24" viewBox="0 0 24 24"><path d="M9.4 2.8 C17 -0.500 25 5 24.800 12.200 C24.600 20 18 24.500 11.500 23.200 C8 22.500 5 19.500 3.100 15.600" fill="none" stroke="#111" stroke-width="1.200"/><path d="M9.4 2.8 L20.7 20.6 L3.1 15.6" fill="none" stroke="#ee1c24" stroke-width="1.3"/><path d="M9.4 2.8 L20.7 20.6 L3.1 15.6" fill="none" stroke="#ffc8c8" stroke-width="0.39"/><circle cx="9.4" cy="2.8" r="1.8" fill="#ee1c24"/><circle cx="3.1" cy="15.6" r="1.8" fill="#ee1c24"/><circle cx="20.7" cy="20.6" r="1.8" fill="#ee1c24"/></svg>
<svg style="position:absolute;left:44px;top:420px;" width="24" height="24" viewBox="0 0 24 24"><path d="M3.2 4 H21 C20.500 13 13 20.300 3.200 20.900 Z" fill="#a9a691" stroke="#55534a" stroke-width="1"/><path d="M2.7 3.6 H21" fill="none" stroke="#ee1c24" stroke-width="1.3"/><path d="M2.7 3.6 H21" fill="none" stroke="#ffc8c8" stroke-width="0.39"/><path d="M21 3.6 L2.7 20.9" fill="none" stroke="#ee1c24" stroke-width="1.6"/><path d="M21 3.6 L2.7 20.9" fill="none" stroke="#ffc8c8" stroke-width="0.48"/><circle cx="2.7" cy="3.6" r="1.5" fill="#ee1c24"/><circle cx="21" cy="3.6" r="1.5" fill="#ee1c24"/><circle cx="2.7" cy="20.9" r="1.5" fill="#ee1c24"/></svg>
<svg style="position:absolute;left:8px;top:462px;" width="24" height="24" viewBox="0 0 24 24"><path d="M12 0.800 L16.600 6.400 H13.700 V11 H10.300 V6.400 H7.400 Z" fill="#ee1c24" stroke="#8a0a0e" stroke-width="0.500" transform="rotate(0 12 12)"/><path d="M12 0.800 L16.600 6.400 H13.700 V11 H10.300 V6.400 H7.400 Z" fill="#ee1c24" stroke="#8a0a0e" stroke-width="0.500" transform="rotate(90 12 12)"/><path d="M12 0.800 L16.600 6.400 H13.700 V11 H10.300 V6.400 H7.400 Z" fill="#ee1c24" stroke="#8a0a0e" stroke-width="0.500" transform="rotate(180 12 12)"/><path d="M12 0.800 L16.600 6.400 H13.700 V11 H10.300 V6.400 H7.400 Z" fill="#ee1c24" stroke="#8a0a0e" stroke-width="0.500" transform="rotate(270 12 12)"/><rect x="10.300" y="10.300" width="3.400" height="3.400" fill="#ee1c24"/><rect x="7.4" y="7.4" width="2.600" height="2.600" fill="#fff" stroke="#888" stroke-width="0.300"/><rect x="14" y="7.4" width="2.600" height="2.600" fill="#fff" stroke="#888" stroke-width="0.300"/><rect x="7.4" y="14" width="2.600" height="2.600" fill="#fff" stroke="#888" stroke-width="0.300"/><rect x="14" y="14" width="2.600" height="2.600" fill="#fff" stroke="#888" stroke-width="0.300"/><rect x="11" y="11" width="2" height="2" fill="#fff"/></svg>
<svg style="position:absolute;left:44px;top:462px;" width="24" height="24" viewBox="0 0 24 24"><polygon points="0.4,12.400 11.500,9.200 23.800,12.400 10.400,18.600" fill="#a9a691" stroke="#55534a" stroke-width="0.900" stroke-linejoin="round"/><polygon points="0.4,12.400 10.400,18.600 10.400,22.400 0.400,15.800" fill="#6f6d5f" stroke="#3a3930" stroke-width="0.900" stroke-linejoin="round"/><polygon points="10.400,18.600 23.800,12.400 23.800,15.800 10.400,22.400" fill="#8d8a78" stroke="#3a3930" stroke-width="0.900" stroke-linejoin="round"/><path d="M11.600 1.300 L16.200 6.900 H14 V13.300 H9.600 V6.900 H7.300 Z" fill="#ee1c24" stroke="#8a0a0e" stroke-width="0.600"/><path d="M8.800 14 H14.800" stroke="#ddd" stroke-width="1"/></svg>
<svg style="position:absolute;left:8px;top:498px;" width="24" height="24" viewBox="0 0 24 24"><path d="M4.270 9.930 A8 8 0 0 1 18.130 6.860 M19.730 14.070 A8 8 0 0 1 5.870 17.140" fill="none" stroke="#4a0608" stroke-width="4.400"/><path d="M21.400 10.800 L21.600 3.800 L14.700 9.800 Z M2.600 13.200 L2.400 20.200 L9.300 14.200 Z" fill="#ee1c24" stroke="#4a0608" stroke-width="1" stroke-linejoin="round"/><path d="M4.270 9.930 A8 8 0 0 1 18.130 6.860 M19.730 14.070 A8 8 0 0 1 5.870 17.140" fill="none" stroke="#ee1c24" stroke-width="3.300"/><path d="M21.400 10.800 L21.600 3.800 L14.700 9.800 Z M2.600 13.200 L2.400 20.200 L9.300 14.200 Z" fill="#ee1c24"/></svg>
<svg style="position:absolute;left:44px;top:498px;" width="24" height="24" viewBox="0 0 24 24"><path d="M0.300 12.700 C0.800 8.500 2.500 6 4.300 4.300 C6.500 2.200 9.500 1.100 12.700 1 C15.500 0.900 19 1.100 21 2 C22.800 3 23.600 4.500 23.300 6 C23 8 22.500 10 21.700 11.300 L19.300 9.300 C17.500 8.800 16 9 14.700 9.300 C12.500 9.900 10.500 10.800 9.300 12 C8.300 13 7.800 13.800 7.700 14.700 C7.500 15.800 7.500 16.800 7.700 17.700 C8 19 8.600 20.300 9.300 21.300 L7 22.700 C5.500 22.600 4.200 22.100 3.300 21.300 C2 20 1.200 18.500 0.700 16.700 C0.400 15.400 0.200 14 0.300 12.700 Z" fill="#55554a" stroke="#14140f" stroke-width="1.100" stroke-linejoin="round"/>
<path d="M2.200 12.500 C3 8 6 4.800 10.500 3.600" fill="none" stroke="#8a8876" stroke-width="1.400"/><ellipse cx="21.400" cy="6.300" rx="1.100" ry="2.800" fill="#b4b19c" transform="rotate(-12 21.400 6.300)"/><path d="M3.800 17.500 C4.800 19.500 6 20.600 7.500 21.200" stroke="#b4b19c" stroke-width="2.200" fill="none" stroke-linecap="round"/>
<path d="M6 12.500 C6.500 8.500 9.500 5.500 13 4.800 L12.300 3.200 L17.600 5.200 L15.400 9 L14.600 7.600 C12 8.300 9.800 10.400 8.800 13.200 Z" fill="#e21a22" stroke="#5a0a0c" stroke-width="0.500" stroke-linejoin="round"/>
<path d="M7.200 14.300 C9.500 14.900 12 14.600 14.200 13.700 L13.800 12.300 L17.800 16.200 L13.500 17.900 L13.700 16.600 C11.500 17.500 9.300 17.500 8 17.200 Z" fill="#e21a22" stroke="#5a0a0c" stroke-width="0.500" stroke-linejoin="round"/></svg>
<svg style="position:absolute;left:8px;top:534px;" width="24" height="24" viewBox="0 0 24 24"><rect x="0.9" y="0.4" width="23.900" height="22.800" fill="#f4f0f0" stroke="#f05a60" stroke-width="0.900"/><rect x="0.9" y="6.200" width="17.800" height="17" fill="#a9a691" stroke="#3a3930" stroke-width="1"/><path d="M25.100 -0.100 L24.200 9.600 L21.300 6.800 L15.600 13.600 L11.800 9.600 L18.400 4 L15.600 0.800 Z" fill="#ee1c24" stroke="#fff" stroke-width="1.600" stroke-linejoin="round"/><path d="M25.100 -0.100 L24.200 9.600 L21.300 6.800 L15.600 13.600 L11.800 9.600 L18.400 4 L15.600 0.800 Z" fill="#ee1c24" stroke="#5a0a0c" stroke-width="0.600" stroke-linejoin="round"/></svg>
<svg style="position:absolute;left:44px;top:534px;" width="24" height="24" viewBox="0 0 24 24"><path d="M0.500 4.800 C7 -1.500 18 0.500 21.800 8.500 C24 13.500 22.800 19.500 19.500 23.300" fill="none" stroke="#ee1c24" stroke-width="1.300"/><path d="M3.200 13.800 C3.500 9.500 6 7.500 9 7.200" fill="none" stroke="#111" stroke-width="1.200"/><path d="M16.500 12.500 C16.800 16.500 15 19.500 12.300 20.800" fill="none" stroke="#111" stroke-width="1.200"/><path d="M21.800 2.200 L21 11.800 L18.200 9 L13.200 14.500 L9.300 10.500 L15.200 5.800 L12.500 3.200 Z" fill="#ee1c24" stroke="#f0f0f0" stroke-width="1.500" stroke-linejoin="round"/><path d="M21.800 2.200 L21 11.800 L18.200 9 L13.200 14.500 L9.300 10.500 L15.200 5.800 L12.500 3.200 Z" fill="#ee1c24" stroke="#5a0a0c" stroke-width="0.600" stroke-linejoin="round"/></svg>
<svg style="position:absolute;left:8px;top:570px;" width="24" height="24" viewBox="0 0 24 24"><path d="M10 13 V22.500" stroke="#a8bce0" stroke-width="2" stroke-dasharray="1.400 1"/><path d="M10 12.500 L3.200 8" stroke="#e04040" stroke-width="1.300" stroke-dasharray="1.300 1.100"/><path d="M10 12.500 L3 17.500" stroke="#40a840" stroke-width="1.300" stroke-dasharray="1.300 1.100"/>
<path d="M10 12.500 V6" stroke="#0a3c8c" stroke-width="2"/><path d="M10 1 L12.800 7.200 H7.200 Z" fill="#0a3c8c"/>
<path d="M10 12.500 L16.500 8.700" stroke="#1c9a3c" stroke-width="1.500"/><path d="M20.500 6.200 L17.400 10.800 L15 7 Z" fill="#1c9a3c"/>
<path d="M10 12.500 L16.500 17" stroke="#d01818" stroke-width="1.500"/><path d="M20.800 19.800 L15.300 18.600 L17.600 15.300 Z" fill="#d01818"/><circle cx="10" cy="12.600" r="1.900" fill="#000"/></svg>
<svg style="position:absolute;left:44px;top:570px;" width="24" height="24" viewBox="0 0 24 24"><polygon points="-1.800,10.500 2.400,6.600 2.400,17.600 -1.800,15.500" fill="#fff" stroke="#222" stroke-width="0.900" stroke-linejoin="round"/><polygon points="2.400,6.600 7,6 7,18 2.400,17.600" fill="#6a6a6a" stroke="#222" stroke-width="0.800"/>
<polygon points="6,2.500 18.800,2 18.800,18.200 8,21.200 6.500,20.700" fill="#2aa8ec" stroke="#e8505a" stroke-width="1"/><polygon points="6,2.500 11,2.300 11,20.300 8,21.200 6.500,20.700" fill="#1a90dc"/><path d="M6 2.500 L18.800 2 M6 2.500 L6.500 20.700" stroke="#e8505a" stroke-width="1"/>
<polygon points="11.400,11.300 16.400,14.800 16.400,22.100 11.400,18.200" fill="#fff" stroke="#222" stroke-width="0.900" stroke-linejoin="round"/><polygon points="16.400,14.800 24.700,11.300 24.700,18.200 16.400,22.100" fill="#fdfdfd" stroke="#222" stroke-width="0.900" stroke-linejoin="round"/><polygon points="11.400,11.300 18.800,6.400 24.700,11.300 16.400,14.800" fill="#9c9985" stroke="#222" stroke-width="0.900" stroke-linejoin="round"/></svg>
<svg style="position:absolute;left:8px;top:611px;" width="24" height="24" viewBox="0 0 24 24"><polygon points="12,15.100 3.100,19.600 4.800,22.300 13.100,17.900" fill="#f2e000" stroke="#222" stroke-width="0.800"/><polygon points="2.400,19.200 3.800,18.600 5.800,22.800 4.200,23.600" fill="#111"/>
<polygon points="9.800,9 14.200,2.900 21.400,2.300 22,9 18.100,15.700 12.600,16.800 9.800,12.900" fill="#7c7c7c" stroke="#111" stroke-width="1.300" stroke-linejoin="round"/><path d="M10.500 9.300 L14.600 3.600 L21 3.100" fill="none" stroke="#333" stroke-width="1.200"/><polygon points="14.800,7.900 18.100,5.100 20.300,6.800 19.800,10.700 17,12.900 14.800,11.200" fill="#f5ea00" stroke="#aaa" stroke-width="0.700"/><path d="M10.600 11 L12 14.500" stroke="#f2e000" stroke-width="1.200"/></svg>
<svg style="position:absolute;left:44px;top:611px;" width="24" height="24" viewBox="0 0 24 24"><path d="M4.5 15.5 L14.5 5.5 M2 11.5 L7 17.5 M12 3.5 L17.5 9.5 M4.5 15.5 L11.5 22.5 M14.5 5.5 L21.5 12" fill="none" stroke="#111" stroke-width="1"/><path d="M3 13 l3.5 3.5 M3 16.5 l3.5 -3.5 M13 3.2 l3.5 3.8 M13 7 l3.5 -3.8" stroke="#111" stroke-width="1.2"/><circle cx="12" cy="23" r="1.2" fill="#28c028"/><circle cx="22" cy="12.5" r="1.2" fill="#28c028"/><path d="M5 5.5 c0-2 3-2.5 3.5-0.8 c0.5 1.8-2 2.5-3 1.6 M5.6 2.5 l2 1.2" fill="none" stroke="#111" stroke-width="0.9"/></svg>
<svg style="position:absolute;left:8px;top:647px;" width="24" height="24" viewBox="0 0 24 24"><path d="M1.5 13 C3 6 12 2.5 22.5 2.5 L8.5 21.5 C5 20 1 17.5 1.5 13 Z" fill="#e8d800" stroke="#55500a" stroke-width="1"/><path d="M6.5 13.5 C7.5 10 12 8 16.5 7.5 L8.5 17.5 C7 16.8 6.2 15.5 6.5 13.5 Z" fill="#f0f0f0" stroke="#55500a" stroke-width="0.9"/><path d="M3 10 l1.6 1 M5 7.5 l1.2 1.3 M8 5.6 l0.8 1.5 M11.5 4.4 l0.5 1.6 M15 3.6 l0.3 1.7 M2.6 14 l1.8 -0.2 M3.6 17 l1.6 -0.8" stroke="#55500a" stroke-width="0.8"/></svg>
<svg style="position:absolute;left:44px;top:647px;" width="24" height="24" viewBox="0 0 24 24"><rect x="7.300" y="0.900" width="16.700" height="14.700" fill="#fff" stroke="#222" stroke-width="1"/><path d="M7.300 8.400 H4.600 V19" fill="none" stroke="#222" stroke-width="1"/><path d="M4.600 22.800 L2.400 17.600 H6.800 Z" fill="#111"/></svg>
<svg style="position:absolute;left:8px;top:683px;" width="24" height="24" viewBox="0 0 24 24"><circle cx="12" cy="12" r="6.6" fill="#fff" stroke="#111" stroke-width="1.1"/><path d="M1 12 H22" stroke="#111" stroke-width="1.6"/><path d="M12.5 2 L22.5 12 L12.5 22" fill="none" stroke="#111" stroke-width="1.4"/></svg>
<svg style="position:absolute;left:44px;top:683px;" width="24" height="24" viewBox="0 0 24 24"><path d="M3 19.5 L9.5 1.5 H14 L21.5 20.5 L22.5 23 L18 23.5 L16.5 19 L9.5 17.5 L8 21.5 Z" fill="#8d8a78" stroke="#3a3930" stroke-width="0.9" stroke-linejoin="round"/><path d="M3 19.5 L8 21.5 M9.5 1.5 L12 4 M16.5 19 L18 23.5 M11 12.5 L14.5 13.5 L12.5 7.5 Z" fill="#f0f0f0" stroke="#3a3930" stroke-width="0.8"/><path d="M12 4 L19 22" stroke="#55534a" stroke-width="2.4"/><path d="M12 4 L6.5 20" stroke="#6f6d5f" stroke-width="2"/></svg>
<svg style="position:absolute;left:8px;top:725px;" width="24" height="24" viewBox="0 0 24 24"><path d="M2.91 12.54 A9 4.600 0 0 1 10.03 8.20" fill="none" stroke="#222" stroke-width="5.2"/><path d="M2.91 12.54 A9 4.600 0 0 1 10.03 8.20" fill="none" stroke="#e0604c" stroke-width="4.2"/><path d="M14.38 8.28 A9 4.600 0 0 1 20.89 12.54" fill="none" stroke="#222" stroke-width="5.4"/><path d="M14.38 8.28 A9 4.600 0 0 1 20.89 12.54" fill="none" stroke="#78d8a0" stroke-width="4.4"/><path d="M9.400 8.300 L15.200 3.200 V12.600 Z" fill="#78d8a0" stroke="#222" stroke-width="0.500" stroke-linejoin="round"/><path d="M2.91 12.86 A9 4.600 0 0 0 10.34 17.23" fill="none" stroke="#222" stroke-width="5.8"/><path d="M2.91 12.86 A9 4.600 0 0 0 10.34 17.23" fill="none" stroke="#d01830" stroke-width="4.8"/><path d="M20.89 12.86 A9 4.600 0 0 1 14.08 17.16" fill="none" stroke="#222" stroke-width="5.8"/><path d="M20.89 12.86 A9 4.600 0 0 1 14.08 17.16" fill="none" stroke="#18a040" stroke-width="4.8"/><path d="M15.400 17 L10 12.400 L9.600 22.800 Z" fill="#d01830" stroke="#222" stroke-width="0.500" stroke-linejoin="round"/><path d="M13.400 15.200 L15.800 17 L13.600 19.600" fill="none" stroke="#fff" stroke-width="0.900"/><path d="M11.900 0.700 V24.700" stroke="#000" stroke-width="1.900"/></svg>
<svg style="position:absolute;left:44px;top:725px;" width="24" height="24" viewBox="0 0 24 24"><path d="M1.200 18.700 L4.200 12.700 L6.900 6.700 C7.800 5 8.800 4 9.900 3.700 L14.700 2.200 L18.500 2.200 L21.500 3.400 L22.600 5.200 L15.900 13.100 L16.200 15 L21.900 16.100 L21.500 18 L14.400 18.700 C12 20.500 9.500 22 7.200 23.200 H4.200 C2.500 22 1.500 20.500 1.200 18.700 Z" fill="#f5deb0" stroke="#4a3c24" stroke-width="0.700" stroke-linejoin="round"/><path d="M11.700 7.100 L15.500 3.200 M14.400 8.200 L19.200 3.200 M16.600 9.400 L21.500 4.700" stroke="#4a3c24" stroke-width="0.800"/><path d="M8 8.500 L11 7.500 L13.500 9 M9.500 18.500 L13 17" stroke="#f8f4a0" stroke-width="1.300" stroke-linecap="round"/></svg>
<svg style="position:absolute;left:8px;top:761px;" width="24" height="24" viewBox="0 0 24 24"><path d="M11.1 14.2 L3.2 21.8" stroke="#1a1a1a" stroke-width="3.2" stroke-linecap="round"/><circle cx="15.9" cy="9.4" r="6.6" fill="#8fb4de" stroke="#1a1a1a" stroke-width="1.200"/><circle cx="14.2" cy="7.8" r="3.0" fill="#a8c8ea"/></svg>
<svg style="position:absolute;left:44px;top:761px;" width="24" height="24" viewBox="0 0 24 24"><rect x="2.600" y="3.900" width="20.600" height="19.900" fill="none" stroke="#ee1c24" stroke-width="1.400" stroke-dasharray="1.500 1.300"/><path d="M11.2 14.2 L3.4 21.8" stroke="#1a1a1a" stroke-width="3.2" stroke-linecap="round"/><circle cx="16" cy="9.4" r="6.6" fill="#8fb4de" stroke="#1a1a1a" stroke-width="1.200"/><circle cx="14.3" cy="7.8" r="3.0" fill="#a8c8ea"/></svg>
<svg style="position:absolute;left:8px;top:797px;" width="24" height="24" viewBox="0 0 24 24"><path d="M8.7 16.3 L2.4 22.6" stroke="#1a1a1a" stroke-width="3.2" stroke-linecap="round"/><circle cx="12.6" cy="12.4" r="5.4" fill="#8fb4de" stroke="#1a1a1a" stroke-width="1.200"/><circle cx="11.2" cy="11.1" r="2.4" fill="#a8c8ea"/><path d="M0 -11.500 L3.600 -6.800 H1.400 V-3 H-1.400 V-6.800 H-3.600 Z" fill="#ee1c24" stroke="#7a0a0e" stroke-width="0.500" transform="translate(12.600 12.400) rotate(-45) scale(1.350)"/><path d="M0 -11.500 L3.600 -6.800 H1.400 V-3 H-1.400 V-6.800 H-3.600 Z" fill="#ee1c24" stroke="#7a0a0e" stroke-width="0.500" transform="translate(12.600 12.400) rotate(45) scale(1.350)"/><path d="M0 -11.500 L3.600 -6.800 H1.400 V-3 H-1.400 V-6.800 H-3.600 Z" fill="#ee1c24" stroke="#7a0a0e" stroke-width="0.500" transform="translate(12.600 12.400) rotate(135) scale(1.350)"/></svg>
<svg style="position:absolute;left:44px;top:797px;" width="24" height="24" viewBox="0 0 24 24"><path d="M15 22 L23 21" stroke="#000" stroke-width="0"/><circle cx="8" cy="9" r="5.8" fill="#9cc0ea" stroke="#222" stroke-width="1.1"/><path d="M12 13 L21.5 21.5" stroke="#111" stroke-width="3" stroke-linecap="round"/><path d="M2.5 8.5 L9.5 1.5 V5 C16 4.5 21 8.5 20.5 16.5 C19 12.5 15.5 10.8 9.5 11.5 V15.2 Z" fill="#1e8ef0" stroke="#0d5ea8" stroke-width="0.7"/></svg>
<svg style="position:absolute;left:8px;top:840px;" width="24" height="24" viewBox="0 0 24 24"><path d="M12 0.8 a1.6 1.6 0 1 1 -0.01 0 M9.6 5 H14.4 L15.6 12 L14.6 12.2 V19.5 H12.6 L12 14 L11.4 19.5 H9.4 V12.2 L8.4 12 Z" fill="#fff" stroke="#111" stroke-width="0.9"/><path d="M7 18 L17 22.8 M17 18 L7 22.8" stroke="#e8141c" stroke-width="1.2"/></svg>
<svg style="position:absolute;left:44px;top:840px;" width="24" height="24" viewBox="0 0 24 24"><g fill="#7c7c7c"><path d="M3.5 10 C3 6.5 4.2 3.8 6.3 3.6 C8.4 3.5 9.6 6 9.8 9.5 C10 12 9.6 14.4 9.2 15.5 L4.8 16.2 C4.2 14.5 3.7 12 3.5 10 Z"/><path d="M5 17.4 L9.2 16.8 C9.6 19 9 20.6 7.6 20.8 C6 21 5.2 19.4 5 17.4 Z"/><path d="M14.5 8.5 C15.2 4.5 17.4 1.8 19.6 2.3 C21.6 2.8 22 5.8 21 9.2 C20.4 11.4 19.2 13.4 18.4 14.5 L14.2 13.4 C14 12 14.2 10 14.5 8.5 Z"/><path d="M14 14.6 L18 15.7 C17.6 17.8 16.5 19.2 15.1 18.9 C13.7 18.5 13.6 16.6 14 14.6 Z"/></g></svg>
<svg style="position:absolute;left:8px;top:876px;" width="24" height="24" viewBox="0 0 24 24"><path d="M1 12.5 C4 7 9 4.5 14 5 C18.5 5.5 22 8.5 23.5 12 C20 15 16 17 12 17 C7.5 17 3.5 15 1 12.5 Z" fill="#fff" stroke="#444" stroke-width="0.9"/><circle cx="11.5" cy="11.2" r="4.6" fill="#555"/><circle cx="11.5" cy="11.2" r="2.4" fill="#000"/><circle cx="10" cy="9.6" r="1.1" fill="#fff"/><path d="M1.5 9 C5 3.5 11 1.5 16 2.5 C19.5 3.2 22 5 23.5 7.5" fill="none" stroke="#222" stroke-width="1.8"/><path d="M3 15.5 C7 19.5 15 20.5 21 16" fill="none" stroke="#aaa" stroke-width="0.8"/></svg>
<svg style="position:absolute;left:44px;top:876px;" width="24" height="24" viewBox="0 0 24 24"><path d="M3.500 12 L13.500 6.200 V17.800 Z" fill="none" stroke="#7c7c7c" stroke-width="1.300" stroke-linejoin="round"/><path d="M11 7.800 C13 10 13 14 11 16.200" fill="none" stroke="#7c7c7c" stroke-width="1.300"/><path d="M13.500 6.200 L20.500 1.500 M13.500 17.800 L20.500 22.500" stroke="#7c7c7c" stroke-width="1.100" stroke-dasharray="1.800 1.300"/><path d="M18.500 3.200 C22.500 8 22.500 16 18.500 20.800" fill="none" stroke="#7c7c7c" stroke-width="1.200"/><path d="M16.800 3.600 L18.700 2.800 L20 4.800 M16.800 20.400 L18.700 21.200 L20 19.200" fill="none" stroke="#7c7c7c" stroke-width="1"/></svg>
<svg style="position:absolute;left:8px;top:918px;" width="24" height="24" viewBox="0 0 24 24"><path d="M11 1.300 L19.300 5.800 V10.500 M11 1.300 L2.200 5.800 V16.200 L10.500 21 L13 19.700" fill="none" stroke="#0f65ad" stroke-width="2" stroke-linejoin="round"/><path d="M11 4.900 L16 7.600 V10.500 M11 4.900 L5.600 7.800 V14.400 L10.600 17.300 L13 16.200" fill="none" stroke="#0f65ad" stroke-width="1.600" stroke-linejoin="round"/><path d="M11 8.400 L13.800 10 V13.200 L11 14.800 L8.200 13.200 V10 Z M8.200 10 L11 11.600 L13.800 10 M11 11.600 V14.800" fill="none" stroke="#0f65ad" stroke-width="1"/><path d="M16.300 12.300 H20.700 V17.300 H23.300 L18.500 23 L13.700 17.300 H16.300 Z" fill="#fff" stroke="#0f65ad" stroke-width="1.400" stroke-linejoin="round"/></svg>
<svg style="position:absolute;left:44px;top:918px;" width="24" height="24" viewBox="0 0 24 24"><path d="M1.800 5 Q7.500 6 11.600 11.200 Q15.700 6 21.600 3.800" fill="none" stroke="#0f65ad" stroke-width="3.200" stroke-linejoin="round"/><path d="M1.800 8.600 Q5.500 9.200 8.200 11.800 M21.600 7.400 Q17.800 8.500 15 11.800" fill="none" stroke="#0f65ad" stroke-width="1.500"/><path d="M19 2 L22.300 0.600" stroke="#0f65ad" stroke-width="1.400"/><path d="M1.800 18.100 Q7.500 17.300 11.600 12.800 Q15.700 17.300 21.600 18.100" fill="none" stroke="#0f65ad" stroke-width="3.200" stroke-linejoin="round"/><path d="M1.800 21.800 Q7.500 21 11.600 17 Q15.700 21 21.600 21.800" fill="none" stroke="#0f65ad" stroke-width="1.500"/></svg>
<svg style="position:absolute;left:8px;top:954px;" width="24" height="24" viewBox="0 0 24 24"><path d="M1.600 6.400 L10 2.200 L18.400 6.400 L10 10.600 Z" fill="none" stroke="#0f65ad" stroke-width="1.900" stroke-linejoin="round"/><path d="M6.500 6.400 L10 4.700 L13.500 6.400 L10 8.100 Z" fill="none" stroke="#0f65ad" stroke-width="1.500" stroke-linejoin="round"/><path d="M1.600 10.600 L10 14.800 L14 12.800 M1.600 14.600 L10 18.800 L12.500 17.600 M1.600 18.600 L10 22.800 L12.500 21.600" fill="none" stroke="#0f65ad" stroke-width="2.100" stroke-linejoin="round"/><path d="M13 14.300 H18.400 V11.300 L24 17 L18.400 22.700 V19.700 H13 Z" fill="#fff" stroke="#0f65ad" stroke-width="1.400" stroke-linejoin="round"/></svg>
<svg style="position:absolute;left:44px;top:954px;" width="24" height="24" viewBox="0 0 24 24"><path d="M1.800 5 Q7.500 6 11.600 11.200 Q15.700 6 21.600 3.800" fill="none" stroke="#0f65ad" stroke-width="3.200" stroke-linejoin="round"/><path d="M1.800 8.600 Q5.500 9.200 8.200 11.800 M21.600 7.400 Q17.800 8.500 15 11.800" fill="none" stroke="#0f65ad" stroke-width="1.500"/><path d="M19 2 L22.300 0.600" stroke="#0f65ad" stroke-width="1.400"/><path d="M1.800 18.100 Q7.500 17.300 11.600 12.800 Q13.500 15 15.500 16.300" fill="none" stroke="#0f65ad" stroke-width="3.200" stroke-linejoin="round"/><path d="M1.800 21.800 Q7.500 21 11.600 17 L13 18.300" fill="none" stroke="#0f65ad" stroke-width="1.500"/><circle cx="18.600" cy="18.300" r="4.700" fill="#f0f0f0" stroke="#0f65ad" stroke-width="2.600" stroke-dasharray="2.100 1.590"/><circle cx="18.600" cy="18.300" r="3.600" fill="#f0f0f0" stroke="#0f65ad" stroke-width="1.400"/><circle cx="18.600" cy="18.300" r="1.500" fill="none" stroke="#0f65ad" stroke-width="1"/></svg>
<span style="position:absolute;top:651.98px;font-size:9px;line-height:9px;white-space:pre;color:#000;font-family:'Liberation Serif',serif;left:54.70px;transform-origin:0 0;transform:scaleX(0.9637);">A1</span>
<span style="position:absolute;top:690.37px;font-size:5px;line-height:5px;white-space:pre;color:#222;font-family:'Liberation Serif',serif;left:17.90px;transform-origin:0 0;transform:scaleX(1.2593);">C</span>
<span style="position:absolute;top:696.97px;font-size:5px;line-height:5px;white-space:pre;color:#222;font-family:'Liberation Serif',serif;left:16.00px;transform-origin:0 0;transform:scaleX(0.9596);">A B</span>
<!-- p04_viewport.py -->
<div style="position:absolute;left:76px;top:123.5px;width:1431px;height:32.5px;background:#f0f0f0;box-sizing:border-box;border-top:1px solid #d2d2d2;border-right:1px solid #dcdcdc;border-radius:0 3px 0 0;"></div>
<div style="position:absolute;left:77px;top:125px;width:1px;height:10px;background:#fcfcfc;"></div>
<div style="position:absolute;left:77px;top:135px;width:258px;height:21px;background:#fff;"></div>
<span style="position:absolute;top:139.94px;font-size:12px;line-height:12px;white-space:pre;color:#000;font-family:'Liberation Sans',sans-serif;left:101.80px;transform-origin:0 0;transform:scaleX(0.9729);">Perspektive</span>
<svg style="position:absolute;left:76px;top:156px;" width="1431" height="830" viewBox="0 0 1431 830"><rect x="0" y="0" width="1431" height="657" fill="#c5cdd0"/><rect x="0" y="657" width="1431" height="173" fill="#cdcdc7"/><rect x="540" y="283" width="360" height="126" fill="#fff"/><rect x="633" y="409" width="163" height="249" fill="#fff"/><rect x="540" y="400" width="93" height="9" fill="#fff"/><rect x="515.7" y="658" width="400" height="26.8" fill="#fff"/><line x1="540" y1="283" x2="901" y2="283" stroke="#000" stroke-width="2" /><line x1="900" y1="282" x2="900" y2="384" stroke="#000" stroke-width="2" /><line x1="540" y1="399.5" x2="634" y2="399.5" stroke="#000" stroke-width="1.8" /><line x1="540" y1="409" x2="634" y2="409" stroke="#000" stroke-width="2" /><line x1="633.2" y1="399" x2="633.2" y2="659" stroke="#000" stroke-width="2.2" /><line x1="795" y1="409" x2="892" y2="409" stroke="#000" stroke-width="2" /><line x1="796" y1="408" x2="796" y2="657" stroke="#000" stroke-width="2.2" /><line x1="998.7" y1="0" x2="998.7" y2="657" stroke="#3c3cc0" stroke-width="1.5" /><line x1="998.7" y1="660" x2="998.7" y2="830" stroke="#3c3cc0" stroke-width="1.6" stroke-dasharray="1.1 2.9"/><line x1="0" y1="657.2" x2="999" y2="657.2" stroke="#2caa34" stroke-width="1.7" /><line x1="1001.8" y1="657.4" x2="1431" y2="657.4" stroke="#22b030" stroke-width="1.5" stroke-dasharray="1.1 2.9"/><path d="M515.7 657.5 V684.7 H915.6 V657.5" fill="none" stroke="#000" stroke-width="2.3" stroke-linejoin="round"/><line x1="537" y1="658.6" x2="634.3" y2="658.6" stroke="#000" stroke-width="2.6" /><line x1="540" y1="657.2" x2="797" y2="657.2" stroke="#0a780e" stroke-width="1.7" /><line x1="892" y1="657.6" x2="916" y2="657.6" stroke="#0a780e" stroke-width="1.2" /><path d="M514 146 Q514 144 516 144 H538 Q540 144 540 146 V450 H541 V650 H540 V656.6 H514 Z" fill="#000"/><path d="M901 371 Q901 369 903 369 H915 Q917 369 917 371 V656.6 H891 V384 Q891 382 893 382 H901 Z" fill="#000"/><line x1="902" y1="371" x2="902" y2="382" stroke="#aaa" stroke-width="0.8" /></svg>
<div style="position:absolute;left:75px;top:156px;width:1px;height:830px;background:#a0a0a0;"></div>
<div style="position:absolute;left:1507px;top:156px;width:1px;height:830px;background:#f6f6f6;"></div>
<span style="position:absolute;top:158.16px;font-size:9.5px;line-height:9.5px;white-space:pre;color:#111;font-family:'Liberation Sans',sans-serif;left:78.50px;transform-origin:0 0;transform:scaleX(1.0596);">Links</span>
<!-- p05_tray.py -->
<div style="position:absolute;left:1512px;top:124px;width:406px;height:861px;background:#f4f7fc;box-sizing:border-box;border:1px solid #d8d8d8;"></div>
<div style="position:absolute;left:1915.6px;top:153px;width:1.6px;height:831px;background:#fbfbfb;"></div>
<div style="position:absolute;left:1513px;top:981.8px;width:404px;height:2.4px;background:#fff;"></div>
<div style="position:absolute;left:1512px;top:124px;width:407px;height:2px;background:#b4b4b4;"></div>
<div style="position:absolute;left:1513px;top:126px;width:406px;height:26px;background:linear-gradient(180deg,#9cb7d6 0%,#a9c3e1 50%,#bdd6f0 100%);"></div>
<div style="position:absolute;left:1513px;top:152px;width:406px;height:1px;background:#fdfdfd;"></div>
<div style="position:absolute;left:1513px;top:153px;width:403px;height:108px;background:#f0f0f0;"></div>
<span style="position:absolute;top:134.69px;font-size:11px;line-height:11px;white-space:pre;color:#000;font-family:'Liberation Sans',sans-serif;left:1517.00px;transform-origin:0 0;transform:scaleX(0.9871);">Standard-Ablage</span>
<div style="position:absolute;left:1887px;top:134px;width:11px;height:11px;box-sizing:border-box;border:1px solid #6a6a6a;border-radius:2px;"></div>
<svg style="position:absolute;left:1887px;top:134px;" width="11" height="11" viewBox="0 0 11 11"><path d="M3.3 2.4 H7.7 M3 6 H8 M5.5 6 V9.2" stroke="#5a5a5a" stroke-width="1.1" fill="none"/><rect x="4" y="2.4" width="3" height="3.6" fill="#6a6a6a"/></svg>
<div style="position:absolute;left:1905px;top:134px;width:11px;height:11px;box-sizing:border-box;border:1px solid #6a6a6a;border-radius:2px;"></div>
<svg style="position:absolute;left:1905px;top:134px;" width="11" height="11" viewBox="0 0 11 11"><path d="M3 3 L8 8 M8 3 L3 8" stroke="#666" stroke-width="1" fill="none"/></svg>
<div style="position:absolute;left:1514px;top:156px;width:402px;height:20px;box-sizing:border-box;border:1px solid #9a9a9a;border-bottom-color:#8a8a8a;background:linear-gradient(180deg,#fafafa 0%,#f0f0f0 12%,#dedede 40%,#c4c4c4 65%,#a8a8a8 90%,#9e9e9e 100%);"></div><svg style="position:absolute;left:1521px;top:162px;" width="8" height="9" viewBox="0 0 8 9"><path d="M0.5 0.5 V7.5 L6 4 Z" fill="#000"/></svg><span style="position:absolute;top:161.69px;font-size:11px;line-height:11px;white-space:pre;color:#000;font-family:'Liberation Sans',sans-serif;left:1533.00px;transform-origin:0 0;transform:scaleX(0.9663);">Gliederung</span><div style="position:absolute;left:1899.5px;top:159px;width:13px;height:13.5px;background:#e9e9e9;box-sizing:border-box;border:1px solid #f3f3f3;box-shadow:0 0 0 0.5px rgba(90,90,90,0.35);"></div><svg style="position:absolute;left:1903.6px;top:163.4px;" width="5" height="5" viewBox="0 0 5 5"><path d="M0.5 0.5 L4.5 4.5 M4.5 0.5 L0.5 4.5" stroke="#222" stroke-width="1.05"/></svg>
<div style="position:absolute;left:1514px;top:177px;width:402px;height:20px;box-sizing:border-box;border:1px solid #9a9a9a;border-bottom-color:#8a8a8a;background:linear-gradient(180deg,#fafafa 0%,#f0f0f0 12%,#dedede 40%,#c4c4c4 65%,#a8a8a8 90%,#9e9e9e 100%);"></div><svg style="position:absolute;left:1521px;top:183px;" width="8" height="9" viewBox="0 0 8 9"><path d="M0.5 0.5 V7.5 L6 4 Z" fill="#000"/></svg><span style="position:absolute;top:182.69px;font-size:11px;line-height:11px;white-space:pre;color:#000;font-family:'Liberation Sans',sans-serif;left:1533.00px;transform-origin:0 0;transform:scaleX(0.9850);">Materialien</span><div style="position:absolute;left:1899.5px;top:180px;width:13px;height:13.5px;background:#e9e9e9;box-sizing:border-box;border:1px solid #f3f3f3;box-shadow:0 0 0 0.5px rgba(90,90,90,0.35);"></div><svg style="position:absolute;left:1903.6px;top:184.4px;" width="5" height="5" viewBox="0 0 5 5"><path d="M0.5 0.5 L4.5 4.5 M4.5 0.5 L0.5 4.5" stroke="#222" stroke-width="1.05"/></svg>
<div style="position:absolute;left:1514px;top:198px;width:402px;height:20px;box-sizing:border-box;border:1px solid #9a9a9a;border-bottom-color:#8a8a8a;background:linear-gradient(180deg,#fafafa 0%,#f0f0f0 12%,#dedede 40%,#c4c4c4 65%,#a8a8a8 90%,#9e9e9e 100%);"></div><svg style="position:absolute;left:1521px;top:204px;" width="8" height="9" viewBox="0 0 8 9"><path d="M0.5 0.5 V7.5 L6 4 Z" fill="#000"/></svg><span style="position:absolute;top:203.69px;font-size:11px;line-height:11px;white-space:pre;color:#000;font-family:'Liberation Sans',sans-serif;left:1533.00px;transform-origin:0 0;transform:scaleX(0.9781);">Komponenten</span><div style="position:absolute;left:1899.5px;top:201px;width:13px;height:13.5px;background:#e9e9e9;box-sizing:border-box;border:1px solid #f3f3f3;box-shadow:0 0 0 0.5px rgba(90,90,90,0.35);"></div><svg style="position:absolute;left:1903.6px;top:205.4px;" width="5" height="5" viewBox="0 0 5 5"><path d="M0.5 0.5 L4.5 4.5 M4.5 0.5 L0.5 4.5" stroke="#222" stroke-width="1.05"/></svg>
<div style="position:absolute;left:1514px;top:219px;width:402px;height:20px;box-sizing:border-box;border:1px solid #9a9a9a;border-bottom-color:#8a8a8a;background:linear-gradient(180deg,#fafafa 0%,#f0f0f0 12%,#dedede 40%,#c4c4c4 65%,#a8a8a8 90%,#9e9e9e 100%);"></div><svg style="position:absolute;left:1521px;top:225px;" width="8" height="9" viewBox="0 0 8 9"><path d="M0.5 0.5 V7.5 L6 4 Z" fill="#000"/></svg><span style="position:absolute;top:224.69px;font-size:11px;line-height:11px;white-space:pre;color:#000;font-family:'Liberation Sans',sans-serif;left:1533.00px;transform-origin:0 0;transform:scaleX(1.0329);">Tags</span><div style="position:absolute;left:1899.5px;top:222px;width:13px;height:13.5px;background:#e9e9e9;box-sizing:border-box;border:1px solid #f3f3f3;box-shadow:0 0 0 0.5px rgba(90,90,90,0.35);"></div><svg style="position:absolute;left:1903.6px;top:226.4px;" width="5" height="5" viewBox="0 0 5 5"><path d="M0.5 0.5 L4.5 4.5 M4.5 0.5 L0.5 4.5" stroke="#222" stroke-width="1.05"/></svg>
<div style="position:absolute;left:1514px;top:240px;width:402px;height:20px;box-sizing:border-box;border:1px solid #9a9a9a;border-bottom-color:#8a8a8a;background:linear-gradient(180deg,#fafafa 0%,#f0f0f0 12%,#dedede 40%,#c4c4c4 65%,#a8a8a8 90%,#9e9e9e 100%);"></div><svg style="position:absolute;left:1520px;top:246px;" width="9" height="8" viewBox="0 0 9 8"><path d="M0.5 0.5 H7.5 L4 7 Z" fill="#000"/></svg><span style="position:absolute;top:245.69px;font-size:11px;line-height:11px;white-space:pre;color:#000;font-family:'Liberation Sans',sans-serif;left:1533.00px;transform-origin:0 0;transform:scaleX(0.9649);">Szenen</span><div style="position:absolute;left:1899.5px;top:243px;width:13px;height:13.5px;background:#e9e9e9;box-sizing:border-box;border:1px solid #f3f3f3;box-shadow:0 0 0 0.5px rgba(90,90,90,0.35);"></div><svg style="position:absolute;left:1903.6px;top:247.4px;" width="5" height="5" viewBox="0 0 5 5"><path d="M0.5 0.5 L4.5 4.5 M4.5 0.5 L0.5 4.5" stroke="#222" stroke-width="1.05"/></svg>
<div style="position:absolute;left:1514px;top:260px;width:402px;height:26px;background:#f4f7fc;"></div>
<svg style="position:absolute;left:1518px;top:264px;" width="16" height="16" viewBox="0 0 16 16"><g fill="none" stroke="#111" stroke-width="1.7"><path d="M2.2 7 A6 6 0 0 1 13 4.6"/><path d="M13.8 9 A6 6 0 0 1 3 11.4"/></g><path d="M14.6 1.2 V6.4 H9.4 Z" fill="#111"/><path d="M1.4 14.8 V9.6 H6.6 Z" fill="#111"/></svg>
<svg style="position:absolute;left:1543px;top:264px;" width="17" height="17" viewBox="0 0 17 17"><circle cx="8.5" cy="8" r="6.8" fill="none" stroke="#111" stroke-width="1.5"/><path d="M4.2 8 H12.8 M8.5 3.7 V12.3" stroke="#111" stroke-width="2.6"/></svg>
<svg style="position:absolute;left:1567.2px;top:264px;" width="17" height="17" viewBox="0 0 17 17"><circle cx="8.5" cy="8" r="6.8" fill="none" stroke="#111" stroke-width="1.5"/><path d="M4.2 8 H12.8" stroke="#111" stroke-width="2.1"/></svg>
<svg style="position:absolute;left:1794px;top:265px;" width="10" height="14" viewBox="0 0 10 14"><path d="M8.5 1.5 C5.5 1 4.5 2.5 4.5 4.5 V9" fill="none" stroke="#000" stroke-width="2.2"/><path d="M1 8 H8 L4.5 13 Z" fill="#000"/></svg>
<svg style="position:absolute;left:1818px;top:265px;" width="10" height="14" viewBox="0 0 10 14"><path d="M1.5 12 C4.5 12.5 5.5 11 5.5 9 V4.5" fill="none" stroke="#000" stroke-width="2.2"/><path d="M2 5.5 H9 L5.5 0.5 Z" fill="#000"/></svg>
<svg style="position:absolute;left:1839px;top:267px;" width="20" height="14" viewBox="0 0 20 14"><g fill="none" stroke="#111" stroke-width="1.2"><rect x="1.2" y="1.2" width="3.8" height="3.8"/><rect x="1.2" y="8.4" width="3.8" height="3.8"/></g><path d="M7 1.5 H12.5 M7 3.5 H11.5 M7 5.3 H10 M7 8.8 H12.5 M7 10.8 H11.5 M7 12.6 H10" stroke="#333" stroke-width="1"/><path d="M14.5 5 H18.5 L16.5 7.5 Z" fill="#111"/></svg>
<div style="position:absolute;left:1862px;top:261px;width:22px;height:22px;background:#cce4f7;box-sizing:border-box;border:1px solid #0a64b4;"></div>
<svg style="position:absolute;left:1867px;top:264px;" width="12" height="16" viewBox="0 0 12 16"><rect x="1" y="0.5" width="10" height="15" fill="#f4f4f4" stroke="#ccc" stroke-width="0.6"/><rect x="1" y="0.5" width="10" height="7.6" fill="#000"/><rect x="3.5" y="4" width="5" height="1.3" fill="#fff"/><path d="M1.6 14.2 L6 9.8 L10.4 14.2 Z" fill="#000"/></svg>
<svg style="position:absolute;left:1890px;top:263px;" width="17" height="18" viewBox="0 0 17 18"><rect x="1.5" y="5" width="7.5" height="9.5" fill="#fff" stroke="#000" stroke-width="1.4"/><rect x="2.2" y="5.7" width="6" height="2.4" fill="#3c82dc"/><path d="M3 10 H8 M3 12 H8" stroke="#555" stroke-width="0.8"/><path d="M8 1 L15.5 9.5 L8 18 V14 H9.4 V5 H8 Z" fill="#000"/></svg>
<div style="position:absolute;left:1514px;top:285px;width:402px;height:149px;background:#fff;box-sizing:border-box;border:1px solid #828790;"></div>
<div style="position:absolute;left:1518px;top:295px;width:397px;height:67px;background:#fff;box-sizing:border-box;border:3px solid #0078d7;"></div>
<svg style="position:absolute;left:1521px;top:298px;" width="62" height="61" viewBox="0 0 62 61"><rect x="0" y="0" width="62" height="61" fill="#a0a0a0"/><rect x="0" y="11.7" width="62" height="28.5" fill="#c5cdd0"/><rect x="0" y="40.2" width="62" height="8" fill="#cdcdc7"/><rect x="23" y="24.5" width="15.5" height="15.5" fill="#fff"/><rect x="23" y="29.5" width="3.6" height="10.5" fill="#c5cdd0"/><rect x="34" y="29.5" width="3.6" height="10.5" fill="#c5cdd0"/><rect x="21.2" y="17.8" width="1.8" height="23" fill="#111"/><rect x="38" y="27" width="1.6" height="14" fill="#111"/><path d="M26.8 29.5 V40 M33.8 29.5 V40" stroke="#333" stroke-width="0.5"/><rect x="21.5" y="40.2" width="18" height="1.2" fill="#fff" stroke="#444" stroke-width="0.4"/><path d="M0 40 H42.5" stroke="#58b860" stroke-width="0.5"/><path d="M42.5 11.7 V48" stroke="#8a8ad8" stroke-width="0.5"/><path d="M49 57 L57.5 47.5 L59.5 49.3 L51 58.6 Z" fill="#d8181e" stroke="#5a0a0c" stroke-width="0.5"/><path d="M49 57 L51 58.6 L47.8 59.6 Z" fill="#d8c9a0" stroke="#333" stroke-width="0.4"/></svg>
<span style="position:absolute;top:303.69px;font-size:11px;line-height:11px;white-space:pre;color:#000;font-family:'Liberation Sans',sans-serif;font-weight:bold;left:1587.50px;transform-origin:0 0;transform:scaleX(0.9876);">Perspektive</span>
<span style="position:absolute;top:316.69px;font-size:11px;line-height:11px;white-space:pre;color:#000;font-family:'Liberation Sans',sans-serif;left:1587.50px;transform-origin:0 0;transform:scaleX(0.9774);">Foto:</span>
<span style="position:absolute;top:316.69px;font-size:11px;line-height:11px;white-space:pre;color:#8a8a8a;font-family:'Liberation Sans',sans-serif;font-style:italic;left:1613.00px;transform-origin:0 0;transform:scaleX(0.8963);">Keiner</span>
<span style="position:absolute;top:329.69px;font-size:11px;line-height:11px;white-space:pre;color:#8a8a8a;font-family:'Liberation Sans',sans-serif;font-style:italic;left:1587.50px;transform-origin:0 0;transform:scaleX(0.8938);">Keine Beschreibung</span>
<div style="position:absolute;left:1578px;top:447px;width:13px;height:13px;background:#fff;box-sizing:border-box;border:1px solid #333;"></div><svg style="position:absolute;left:1578px;top:447px;" width="13" height="13" viewBox="0 0 13 13"><path d="M2.8 6.5 L5.4 9.3 L10.3 3.4" fill="none" stroke="#444" stroke-width="1.2"/></svg>
<span style="position:absolute;top:449.49px;font-size:11px;line-height:11px;white-space:pre;color:#000;font-family:'Liberation Sans',sans-serif;left:1595.10px;transform-origin:0 0;transform:scaleX(0.9887);">In Animation aufnehmen</span>
<span style="position:absolute;top:470.49px;font-size:11px;line-height:11px;white-space:pre;color:#000;font-family:'Liberation Sans',sans-serif;right:348.50px;transform-origin:100% 0;transform:scaleX(0.9722);">Name:</span>
<div style="position:absolute;left:1578px;top:468px;width:330px;height:20px;background:#fff;box-sizing:border-box;border:1px solid #7a7a7a;"></div>
<span style="position:absolute;top:474.49px;font-size:11px;line-height:11px;white-space:pre;color:#000;font-family:'Liberation Sans',sans-serif;left:1580.00px;transform-origin:0 0;transform:scaleX(0.9736);">Szene 1</span>
<span style="position:absolute;top:496.29px;font-size:11px;line-height:11px;white-space:pre;color:#000;font-family:'Liberation Sans',sans-serif;right:348.50px;transform-origin:100% 0;transform:scaleX(1.0317);">Beschr.:</span>
<div style="position:absolute;left:1578px;top:494px;width:330px;height:20px;background:#fff;box-sizing:border-box;border:1px solid #7a7a7a;"></div>
<span style="position:absolute;top:522.29px;font-size:11px;line-height:11px;white-space:pre;color:#000;font-family:'Liberation Sans',sans-serif;right:348.00px;transform-origin:100% 0;">Properties</span>
<span style="position:absolute;top:535.29px;font-size:11px;line-height:11px;white-space:pre;color:#000;font-family:'Liberation Sans',sans-serif;right:348.50px;transform-origin:100% 0;transform:scaleX(1.0384);">to save:</span>
<div style="position:absolute;left:1578px;top:526px;width:13px;height:13px;background:#fff;box-sizing:border-box;border:1px solid #333;"></div><svg style="position:absolute;left:1578px;top:526px;" width="13" height="13" viewBox="0 0 13 13"><path d="M2.8 6.5 L5.4 9.3 L10.3 3.4" fill="none" stroke="#444" stroke-width="1.2"/></svg>
<span style="position:absolute;top:527.99px;font-size:11px;line-height:11px;white-space:pre;color:#000;font-family:'Liberation Sans',sans-serif;left:1595.10px;transform-origin:0 0;transform:scaleX(0.9603);">Kameraposition</span>
<div style="position:absolute;left:1578px;top:554px;width:13px;height:13px;background:#fff;box-sizing:border-box;border:1px solid #333;"></div><svg style="position:absolute;left:1578px;top:554px;" width="13" height="13" viewBox="0 0 13 13"><path d="M2.8 6.5 L5.4 9.3 L10.3 3.4" fill="none" stroke="#444" stroke-width="1.2"/></svg>
<span style="position:absolute;top:555.99px;font-size:11px;line-height:11px;white-space:pre;color:#000;font-family:'Liberation Sans',sans-serif;left:1595.10px;transform-origin:0 0;transform:scaleX(0.9778);">Ausgeblendete Geometrie oberster Ebene</span>
<div style="position:absolute;left:1578px;top:577px;width:13px;height:13px;background:#fff;box-sizing:border-box;border:1px solid #333;"></div><svg style="position:absolute;left:1578px;top:577px;" width="13" height="13" viewBox="0 0 13 13"><path d="M2.8 6.5 L5.4 9.3 L10.3 3.4" fill="none" stroke="#444" stroke-width="1.2"/></svg>
<span style="position:absolute;top:578.99px;font-size:11px;line-height:11px;white-space:pre;color:#000;font-family:'Liberation Sans',sans-serif;left:1595.10px;transform-origin:0 0;transform:scaleX(0.9924);">Ausgeblendete Objekte</span>
<div style="position:absolute;left:1578px;top:600px;width:13px;height:13px;background:#fff;box-sizing:border-box;border:1px solid #333;"></div><svg style="position:absolute;left:1578px;top:600px;" width="13" height="13" viewBox="0 0 13 13"><path d="M2.8 6.5 L5.4 9.3 L10.3 3.4" fill="none" stroke="#444" stroke-width="1.2"/></svg>
<span style="position:absolute;top:601.99px;font-size:11px;line-height:11px;white-space:pre;color:#000;font-family:'Liberation Sans',sans-serif;left:1595.10px;transform-origin:0 0;transform:scaleX(0.9922);">Sichtbare Tags</span>
<div style="position:absolute;left:1578px;top:623px;width:13px;height:13px;background:#fff;box-sizing:border-box;border:1px solid #333;"></div><svg style="position:absolute;left:1578px;top:623px;" width="13" height="13" viewBox="0 0 13 13"><path d="M2.8 6.5 L5.4 9.3 L10.3 3.4" fill="none" stroke="#444" stroke-width="1.2"/></svg>
<span style="position:absolute;top:624.99px;font-size:11px;line-height:11px;white-space:pre;color:#000;font-family:'Liberation Sans',sans-serif;left:1595.10px;transform-origin:0 0;transform:scaleX(0.9918);">Aktive Schnittebenen</span>
<div style="position:absolute;left:1578px;top:646px;width:13px;height:13px;background:#fff;box-sizing:border-box;border:1px solid #333;"></div><svg style="position:absolute;left:1578px;top:646px;" width="13" height="13" viewBox="0 0 13 13"><path d="M2.8 6.5 L5.4 9.3 L10.3 3.4" fill="none" stroke="#444" stroke-width="1.2"/></svg>
<span style="position:absolute;top:647.99px;font-size:11px;line-height:11px;white-space:pre;color:#000;font-family:'Liberation Sans',sans-serif;left:1595.10px;transform-origin:0 0;transform:scaleX(0.9637);">Stil und Nebel</span>
<div style="position:absolute;left:1578px;top:669px;width:13px;height:13px;background:#fff;box-sizing:border-box;border:1px solid #333;"></div><svg style="position:absolute;left:1578px;top:669px;" width="13" height="13" viewBox="0 0 13 13"><path d="M2.8 6.5 L5.4 9.3 L10.3 3.4" fill="none" stroke="#444" stroke-width="1.2"/></svg>
<span style="position:absolute;top:670.99px;font-size:11px;line-height:11px;white-space:pre;color:#000;font-family:'Liberation Sans',sans-serif;left:1595.10px;transform-origin:0 0;transform:scaleX(0.9838);">Schatteneinstellungen</span>
<div style="position:absolute;left:1578px;top:692px;width:13px;height:13px;background:#fff;box-sizing:border-box;border:1px solid #333;"></div><svg style="position:absolute;left:1578px;top:692px;" width="13" height="13" viewBox="0 0 13 13"><path d="M2.8 6.5 L5.4 9.3 L10.3 3.4" fill="none" stroke="#444" stroke-width="1.2"/></svg>
<span style="position:absolute;top:693.99px;font-size:11px;line-height:11px;white-space:pre;color:#000;font-family:'Liberation Sans',sans-serif;left:1595.10px;transform-origin:0 0;transform:scaleX(0.9718);">Achsenposition</span>
<div style="position:absolute;left:1514px;top:709px;width:402px;height:9px;background:#f0f0f0;box-sizing:border-box;border:1px solid #a8a8a8;"></div>
<div style="position:absolute;left:1514px;top:719px;width:402px;height:20px;box-sizing:border-box;border:1px solid #9a9a9a;border-bottom-color:#8a8a8a;background:linear-gradient(180deg,#fafafa 0%,#f0f0f0 12%,#dedede 40%,#c4c4c4 65%,#a8a8a8 90%,#9e9e9e 100%);"></div><svg style="position:absolute;left:1521px;top:725px;" width="8" height="9" viewBox="0 0 8 9"><path d="M0.5 0.5 V7.5 L6 4 Z" fill="#000"/></svg><span style="position:absolute;top:724.69px;font-size:11px;line-height:11px;white-space:pre;color:#000;font-family:'Liberation Sans',sans-serif;left:1533.00px;transform-origin:0 0;transform:scaleX(0.9931);">Mentor</span><div style="position:absolute;left:1899.5px;top:722px;width:13px;height:13.5px;background:#e9e9e9;box-sizing:border-box;border:1px solid #f3f3f3;box-shadow:0 0 0 0.5px rgba(90,90,90,0.35);"></div><svg style="position:absolute;left:1903.6px;top:726.4px;" width="5" height="5" viewBox="0 0 5 5"><path d="M0.5 0.5 L4.5 4.5 M4.5 0.5 L0.5 4.5" stroke="#222" stroke-width="1.05"/></svg>
<div style="position:absolute;left:1514px;top:740px;width:402px;height:20px;box-sizing:border-box;border:1px solid #9a9a9a;border-bottom-color:#8a8a8a;background:linear-gradient(180deg,#fafafa 0%,#f0f0f0 12%,#dedede 40%,#c4c4c4 65%,#a8a8a8 90%,#9e9e9e 100%);"></div><svg style="position:absolute;left:1521px;top:746px;" width="8" height="9" viewBox="0 0 8 9"><path d="M0.5 0.5 V7.5 L6 4 Z" fill="#000"/></svg><span style="position:absolute;top:745.69px;font-size:11px;line-height:11px;white-space:pre;color:#000;font-family:'Liberation Sans',sans-serif;left:1533.00px;transform-origin:0 0;transform:scaleX(0.9580);">Stile</span><div style="position:absolute;left:1899.5px;top:743px;width:13px;height:13.5px;background:#e9e9e9;box-sizing:border-box;border:1px solid #f3f3f3;box-shadow:0 0 0 0.5px rgba(90,90,90,0.35);"></div><svg style="position:absolute;left:1903.6px;top:747.4px;" width="5" height="5" viewBox="0 0 5 5"><path d="M0.5 0.5 L4.5 4.5 M4.5 0.5 L0.5 4.5" stroke="#222" stroke-width="1.05"/></svg>
<div style="position:absolute;left:1514px;top:761px;width:402px;height:20px;box-sizing:border-box;border:1px solid #9a9a9a;border-bottom-color:#8a8a8a;background:linear-gradient(180deg,#fafafa 0%,#f0f0f0 12%,#dedede 40%,#c4c4c4 65%,#a8a8a8 90%,#9e9e9e 100%);"></div><svg style="position:absolute;left:1520px;top:767px;" width="9" height="8" viewBox="0 0 9 8"><path d="M0.5 0.5 H7.5 L4 7 Z" fill="#000"/></svg><span style="position:absolute;top:766.69px;font-size:11px;line-height:11px;white-space:pre;color:#000;font-family:'Liberation Sans',sans-serif;left:1533.00px;transform-origin:0 0;transform:scaleX(0.9812);">Elementinformationen</span><div style="position:absolute;left:1899.5px;top:764px;width:13px;height:13.5px;background:#e9e9e9;box-sizing:border-box;border:1px solid #f3f3f3;box-shadow:0 0 0 0.5px rgba(90,90,90,0.35);"></div><svg style="position:absolute;left:1903.6px;top:768.4px;" width="5" height="5" viewBox="0 0 5 5"><path d="M0.5 0.5 L4.5 4.5 M4.5 0.5 L0.5 4.5" stroke="#222" stroke-width="1.05"/></svg>
<span style="position:absolute;top:792.29px;font-size:11px;line-height:11px;white-space:pre;color:#000;font-family:'Liberation Sans',sans-serif;font-weight:bold;left:1522.50px;transform-origin:0 0;transform:scaleX(1.0535);">Keine Auswahl</span>
<div style="position:absolute;left:1523px;top:809px;width:384px;height:1px;background:#8c8c8c;"></div>
<!-- p06_bottom.py -->
<div style="position:absolute;left:112px;top:986px;width:297px;height:25px;background:#f0f0f0;box-sizing:border-box;border-right:1px solid #a0a0a0;border-bottom:1px solid #a0a0a0;border-left:1px solid #fff;"></div>
<svg style="position:absolute;left:116px;top:990px;" width="3" height="18" viewBox="0 0 3 18"><rect x="0" y="0" width="2" height="2" fill="#c0c0c0"/><rect x="0" y="4" width="2" height="2" fill="#c0c0c0"/><rect x="0" y="8" width="2" height="2" fill="#c0c0c0"/><rect x="0" y="12" width="2" height="2" fill="#c0c0c0"/><rect x="0" y="16" width="2" height="2" fill="#c0c0c0"/></svg>
<span style="position:absolute;top:994.29px;font-size:11px;line-height:11px;white-space:pre;color:#000;font-family:'Liberation Sans',sans-serif;left:121.00px;transform-origin:0 0;transform:scaleX(0.9641);">Maßangaben</span>
<div style="position:absolute;left:247px;top:988px;width:160px;height:21px;background:#f0f0f0;box-sizing:border-box;border:1px solid #7a7a7a;border-right-color:#c8c8c8;border-bottom-color:#c8c8c8;"></div>
<svg style="position:absolute;left:6px;top:1018px;" width="16" height="16" viewBox="0 0 16 16"><circle cx="8" cy="8" r="6.6" fill="#f6f6f6" stroke="#b8b8b8" stroke-width="1.2"/><path d="M8 3.6 a2.600 2.600 0 0 1 2.600 2.600 c0 2 -2.600 4.600 -2.600 6.200 c0 -1.600 -2.600 -4.200 -2.600 -6.200 a2.600 2.600 0 0 1 2.600 -2.600 Z" fill="#c4c4c4" stroke="#aaa" stroke-width="0.600"/><circle cx="8" cy="6.200" r="1" fill="#f6f6f6"/></svg>
<svg style="position:absolute;left:30px;top:1018px;" width="16" height="16" viewBox="0 0 16 16"><circle cx="8" cy="8" r="6.6" fill="#fff" stroke="#111" stroke-width="1.4"/><circle cx="8" cy="4.6" r="1.5" fill="#111"/><path d="M5.8 6.8 H10.2 V10 H9.3 V12.6 H6.7 V10 H5.8 Z" fill="#111"/></svg>
<div style="position:absolute;left:56px;top:1016px;width:1px;height:20px;background:#a8a8a8;"></div>
<span style="position:absolute;top:1022.46px;font-size:12px;line-height:12px;white-space:pre;color:#111;font-family:'DejaVu Sans','Liberation Sans',sans-serif;left:63.00px;transform-origin:0 0;transform:scaleX(0.9507);">Klicken oder Ziehen, um Objekte auszuwählen. Umschalttaste = Hinzufügen/Entfernen. Strg-Taste = Hinzufügen. Umschalttaste + Strg = Entfernen.</span>
<div style="position:absolute;left:0px;top:1040px;width:1920px;height:40px;background:linear-gradient(90deg,#22363f 0%,#21353f 45%,#1c2d42 70%,#1a2a43 100%);"></div>
<div style="position:absolute;left:0px;top:1040px;width:48px;height:40px;background:#21353e;"></div>
<svg style="position:absolute;left:16px;top:1052px;" width="17" height="17" viewBox="0 0 17 17"><path d="M0 2.4 L6.9 1.4 V8 H0 Z M7.8 1.3 L16.5 0 V8 H7.8 Z M0 8.9 H6.9 V15.5 L0 14.5 Z M7.8 8.9 H16.5 V17 L7.8 15.7 Z" fill="#fff"/></svg>
<div style="position:absolute;left:48px;top:1040px;width:288px;height:40px;background:#f2f2f2;box-sizing:border-box;border-top:1px solid #d0d0d0;"></div>
<svg style="position:absolute;left:59px;top:1051px;" width="18" height="18" viewBox="0 0 18 18"><circle cx="11" cy="7" r="5.3" fill="none" stroke="#222" stroke-width="1.4"/><path d="M7.2 10.8 L1.2 16.8" stroke="#222" stroke-width="1.5"/></svg>
<span style="position:absolute;top:1052.68px;font-size:15.5px;line-height:15.5px;white-space:pre;color:#333;font-family:'Liberation Sans',sans-serif;left:88.00px;transform-origin:0 0;transform:scaleX(0.8940);">Suchen</span>
<svg style="position:absolute;left:256px;top:1041px;" width="80" height="39" viewBox="0 0 80 39"><defs><radialGradient id="moong" cx="0.55" cy="0.25" r="0.75"><stop offset="0" stop-color="#e6e9eb"/><stop offset="0.55" stop-color="#d0d5d8"/><stop offset="1" stop-color="#9aa1a7"/></radialGradient><linearGradient id="lorg" x1="0" y1="0" x2="1" y2="1"><stop offset="0" stop-color="#ff9a20"/><stop offset="1" stop-color="#e04a18"/></linearGradient><clipPath id="mclip"><rect x="0" y="0" width="80" height="39"/></clipPath></defs>
<g clip-path="url(#mclip)"><circle cx="40" cy="51" r="36.1" fill="url(#moong)"/><circle cx="17.8" cy="32.2" r="4.6" fill="#bcc2c6"/><circle cx="18.3" cy="32.8" r="3.9" fill="#c9ced2"/><circle cx="57" cy="36.3" r="6.6" fill="#b4babf"/><circle cx="57.3" cy="37" r="5.9" fill="#e2e4e6"/>
<path d="M39 16.8 L34.4 23 M51.6 17.3 L53.6 24.8 M57.4 15.6 L60.8 22" stroke="#e0b020" stroke-width="1.1"/><path d="M33.6 23.2 h2 M52.6 25 h2.4 M59.8 22.2 h2.4" stroke="#3a3a4a" stroke-width="1.6"/>
<polygon points="42.2,17.6 47.6,17.6 41.9,26.0 34.1,26.0" fill="#f0c020" stroke="#c89a10" stroke-width="0.5"/>
<path d="M43.6 7 C44 3.500 50.600 3.500 51.300 7 Z" fill="#f0c020"/>
<polygon points="40.0,7.3 49.3,7.3 49.3,17.6 38.6,17.6" fill="#f2c21c"/><polygon points="49.3,7.3 55.5,7.6 57.6,15.4 49.3,17.6" fill="url(#lorg)"/><path d="M39.600 7.400 H55.800" stroke="#c8a010" stroke-width="1"/>
<polygon points="42.2,8.4 47.6,8.4 47.6,17.3 42.2,17.3" fill="#6a9a9c"/><polygon points="42.2,8.4 43.6,8.4 43.6,17.3 42.2,17.3" fill="#9cc8c8"/></g></svg>
<svg style="position:absolute;left:352px;top:1049px;" width="24" height="22" viewBox="0 0 24 22"><path d="M1 3 H8.5 L10.5 5 H22 V19.5 H1 Z" fill="#e8a820"/><path d="M1 7 H22 V20 H1 Z" fill="#fcd34c"/><path d="M5.5 13.5 H17.5 V20 H14 V17 H9 V20 H5.5 Z" fill="#3c96e0"/></svg>
<svg style="position:absolute;left:400px;top:1049px;" width="24" height="23" viewBox="0 0 24 23"><rect x="9" y="3" width="14" height="17" fill="#fff" stroke="#2b579a" stroke-width="0.8"/><path d="M15 6.5 H21.5 M15 9 H21.5 M15 11.5 H21.5 M15 14 H21.5 M15 16.5 H21.5" stroke="#2b579a" stroke-width="1.2"/><path d="M0.5 3 L14 0.5 V22.5 L0.5 20 Z" fill="#2b579a"/></svg>
<span style="position:absolute;top:1056.29px;font-size:11px;line-height:11px;white-space:pre;color:#fff;font-family:'Liberation Sans',sans-serif;font-weight:bold;left:403.00px;transform-origin:0 0;transform:scaleX(0.9632);">W</span>
<svg style="position:absolute;left:449px;top:1049px;" width="24" height="23" viewBox="0 0 24 23"><rect x="11" y="5" width="12.5" height="12.5" fill="#fff" stroke="#0072c6" stroke-width="0.8"/><path d="M11.5 6 L17.5 11.5 L23 6" fill="none" stroke="#0072c6" stroke-width="1.6"/><path d="M0.5 3 L14 0.5 V22.5 L0.5 20 Z" fill="#0072c6"/><ellipse cx="7" cy="11.5" rx="3" ry="3.8" fill="none" stroke="#fff" stroke-width="1.8"/></svg>
<svg style="position:absolute;left:498px;top:1049px;" width="24" height="23" viewBox="0 0 24 23"><rect x="10" y="3" width="13" height="17" fill="#fff" stroke="#217346" stroke-width="0.8"/><path d="M14 6.5 H22 M14 9.5 H22 M14 12.5 H22 M14 15.5 H22 M18 4 V19 " stroke="#217346" stroke-width="1.1"/><path d="M0.5 3 L14 0.5 V22.5 L0.5 20 Z" fill="#217346"/><path d="M4.5 7.5 L10 15.5 M10 7.5 L4.5 15.5" stroke="#fff" stroke-width="1.8"/></svg>
<svg style="position:absolute;left:545px;top:1047px;" width="25" height="25" viewBox="0 0 25 25"><defs><radialGradient id="ffg" cx="0.7" cy="0.2" r="0.9"><stop offset="0" stop-color="#ffe040"/><stop offset="0.45" stop-color="#ff8a18"/><stop offset="0.8" stop-color="#f0283c"/><stop offset="1" stop-color="#c01878"/></radialGradient></defs><path d="M12.5 3.5 C14 1.5 15 1 16.5 0.2 C16.5 3 19 4.5 21.5 8 C24.5 12.5 23.5 19 19.5 22 C15 25.5 7.5 24.5 4 20 C0.5 15.5 1 9 4 6 C4 7.5 4.5 8.5 5.5 9 C6.5 6 9 3.5 12.5 3.5 Z" fill="url(#ffg)"/><circle cx="12.8" cy="13.8" r="5.2" fill="#7848d8"/><path d="M7.5 13 C9 10 13 9.5 15.5 11.5 C13 11 11 12.5 11.5 15 C9.5 15.5 8 14.5 7.5 13 Z" fill="#ffb020"/></svg>
<span style="position:absolute;top:1054.74px;font-size:12px;line-height:12px;white-space:pre;color:#fff;font-family:'Liberation Sans',sans-serif;left:573.00px;transform-origin:0 0;transform:scaleX(0.9497);">K1 Modul_19 Layer ...</span>
<div style="position:absolute;left:539px;top:1078px;width:152px;height:2px;background:#76b9ed;"></div>
<svg style="position:absolute;left:705px;top:1047px;" width="26" height="26" viewBox="0 0 26 26"><circle cx="13" cy="13" r="12" fill="#e8453c"/><path d="M13 13 L2.6 7 A12 12 0 0 0 8 23.9 Z" fill="#34a853"/><path d="M13 13 L8 23.9 A12 12 0 0 0 24.6 9.5 Z" fill="#fbbc05"/><path d="M2.6 7 A12 12 0 0 1 24.6 9.5 H13 Z" fill="#ea4335"/><circle cx="13" cy="13" r="5.6" fill="#fff"/><circle cx="13" cy="13" r="4.3" fill="#4285f4"/></svg>
<span style="position:absolute;top:1054.74px;font-size:12px;line-height:12px;white-space:pre;color:#fff;font-family:'Liberation Sans',sans-serif;left:734.00px;transform-origin:0 0;transform:scaleX(1.0284);">bildschirmfoto auf...</span>
<div style="position:absolute;left:700px;top:1078px;width:152px;height:2px;background:#76b9ed;"></div>
<svg style="position:absolute;left:868px;top:1047px;" width="26" height="26" viewBox="0 0 26 26"><defs><linearGradient id="edg" x1="0" y1="0" x2="1" y2="1"><stop offset="0" stop-color="#35c1f1"/><stop offset="0.5" stop-color="#1b9de2"/><stop offset="1" stop-color="#0c59a4"/></linearGradient></defs><circle cx="13" cy="13" r="12" fill="url(#edg)"/><path d="M13 1 C20 1 25 6.5 25 12 C25 16 22 18 19 18 C16.5 18 15 17 15.5 15.5 C17 13 15.5 9 11 9 C6 9 2.5 13 2 16 C0 9 5 1 13 1 Z" fill="#5cd8a0" opacity="0.85"/><path d="M9.5 14 C9 19 13 24 19 24 C15 26 8 24.5 5 20 C3 16.5 5 12 9.5 11 C10 11.8 9.7 12.8 9.5 14 Z" fill="#0a4f9a"/></svg>
<svg style="position:absolute;left:920px;top:1046.5px;" width="21" height="25" viewBox="0 0 21 25"><g transform="scale(0.82)"><path d="M16 3 C22 2 26 9 22 14 L17 13 C19 10 18 7 15 7 Z" fill="#d84020"/><path d="M5 12 C3 6 8 1 14 2.5 L13 6.5 C10 6.5 8 9 9 12 Z" fill="#d84020"/><path d="M13 2 L16 3 L14 19 L11 18 Z" fill="#e8e8e8" stroke="#999" stroke-width="0.5"/><path d="M15 9 L21 12 L13.5 20 Z" fill="#c8c8c8"/><circle cx="8" cy="22" r="3" fill="none" stroke="#1e90ff" stroke-width="2"/><circle cx="18" cy="26" r="3" fill="none" stroke="#1e90ff" stroke-width="2"/><path d="M10 20 L14 17 M15 23.5 L14 19" stroke="#1e90ff" stroke-width="2"/></g></svg>
<svg style="position:absolute;left:972px;top:1050.5px;" width="14" height="18" viewBox="0 0 14 18"><path d="M0 0 H9 L14 5 V18 H0 Z" fill="#7cb83c"/><path d="M9 0 L14 5 H9 Z" fill="#b8dc8c"/></svg>
<span style="position:absolute;top:1056.44px;font-size:12px;line-height:12px;white-space:pre;color:#fff;font-family:'Liberation Sans',sans-serif;font-weight:bold;left:974.00px;transform-origin:0 0;transform:scaleX(1.4234);">€</span>
<div style="position:absolute;left:1004px;top:1040px;width:160px;height:40px;background:linear-gradient(90deg,#4d5c66,#43525f);"></div>
<div style="position:absolute;left:1004px;top:1078px;width:160px;height:2px;background:#76b9ed;"></div>
<svg style="position:absolute;left:1013px;top:1048px;" width="24" height="25" viewBox="0 0 24 25"><g fill="none" stroke="#1478c0" stroke-width="2.2" stroke-linejoin="round" stroke-linecap="round"><path d="M3 7.5 L12.5 2 L21.5 6.5 L21.5 18.5 L12.5 23.5 L12.5 12 L3 7.5"/><path d="M3 13 L8.5 15.8 V21.5 L3 18.8"/><path d="M17 9.5 V17.5"/><path d="M8 9.5 L16.8 5"/></g></svg>
<span style="position:absolute;top:1054.74px;font-size:12px;line-height:12px;white-space:pre;color:#fff;font-family:'Liberation Sans',sans-serif;left:1041.00px;transform-origin:0 0;transform:scaleX(0.9824);">SchmidtTreppenha...</span>
<svg style="position:absolute;left:1176.5px;top:1051.5px;" width="25" height="19" viewBox="0 0 25 19"><path d="M1 4 L4.500 0.500 H20.500 L24 4 V10 H1 Z" fill="#5a5e66"/><path d="M3.500 4.500 H21.500 V9.500 H3.500 Z" fill="#20242a"/><path d="M7 5 L12 1.500 L18.500 3.500 L13.500 9 Z" fill="#dfe8f8"/><path d="M9.500 5 l3 -2 M11 6.500 l4 -3 M13 7.500 l3 -3" stroke="#7898d0" stroke-width="0.700"/><rect x="5.500" y="9.500" width="14" height="9" fill="#f4f4f4" stroke="#aaa" stroke-width="0.500"/><circle cx="9" cy="13" r="1.800" fill="#f0b020"/><path d="M12 12 H18 M12 14 H18" stroke="#3c78d8" stroke-width="1.300"/><path d="M7 16.500 H18" stroke="#58a858" stroke-width="1.300"/></svg>
<svg style="position:absolute;left:1607px;top:1048.3px;" width="21" height="24" viewBox="0 0 21 24"><g transform="scale(0.86)"><rect x="4" y="1" width="6" height="18" rx="3" fill="#cfe0f8" stroke="#5aa0f0" stroke-width="1"/><circle cx="7" cy="21" r="5" fill="#4ea0f4"/><rect x="5.6" y="8" width="2.8" height="12" fill="#e03030"/><circle cx="7" cy="21" r="3" fill="#e84040" opacity="0.0"/><path d="M17 23 V9" stroke="#e8181c" stroke-width="2.6"/><path d="M12.5 12 L17 5.5 L21.5 12 Z" fill="#e8181c"/><path d="M13 2.5 H21" stroke="#e8181c" stroke-width="2"/></g></svg>
<span style="position:absolute;top:1052.48px;font-size:15.5px;line-height:15.5px;white-space:pre;color:#fff;font-family:'Liberation Sans',sans-serif;left:1637.00px;transform-origin:0 0;transform:scaleX(0.9085);">Hitzerekord</span>
<svg style="position:absolute;left:1734px;top:1054px;" width="15" height="10" viewBox="0 0 15 10"><path d="M1.5 8 L7.5 2 L13.5 8" fill="none" stroke="#fff" stroke-width="1.3"/></svg>
<svg style="position:absolute;left:1756px;top:1051px;" width="18" height="18" viewBox="0 0 18 18"><path d="M1.5 3.5 L15.5 1.5 V14.5 L1.5 13 Z" fill="none" stroke="#fff" stroke-width="1.2"/><path d="M5.5 10 C5.5 7 9 5.5 11.5 7 M11.5 5 V7.2 H9.3 M10.5 10.5 C9 11.5 7 11 6.5 10" fill="none" stroke="#fff" stroke-width="1"/><circle cx="13.5" cy="13.5" r="3.6" fill="#f59a23"/></svg>
<svg style="position:absolute;left:1780px;top:1050px;" width="19" height="20" viewBox="0 0 19 20"><path d="M9 1 C6 3 3.5 3.5 1.5 3.5 V9 C1.5 14 5 17 9 18.5 C13 17 16.500 14 16.500 9 V3.500 C14.500 3.500 12 3 9 1 Z" fill="#fff"/><path d="M9 1 V18.500 C5 17 1.500 14 1.500 9 H16.500 V3.500 C14.500 3.500 12 3 9 1 Z" fill="#fff"/><path d="M9 1.800 V9 H2.300 V4.200 C4.500 4.100 7 3.300 9 1.800 Z M9 9 H15.700 C15.600 13.200 12.500 16.200 9 17.600 Z" fill="#1a2a43"/><circle cx="14" cy="15" r="4" fill="#1ea84a"/><path d="M12 15 L13.500 16.600 L16.200 13.600" fill="none" stroke="#fff" stroke-width="1.100"/></svg>
<svg style="position:absolute;left:1804px;top:1052px;" width="19" height="17" viewBox="0 0 19 17"><rect x="4.500" y="2.500" width="13" height="9" fill="none" stroke="#fff" stroke-width="1.200"/><path d="M11 11.500 V15 M7 15.500 H15" stroke="#fff" stroke-width="1.200"/><rect x="0.600" y="0.600" width="5.500" height="4.500" fill="#1b2c42" stroke="#fff" stroke-width="1"/></svg>
<svg style="position:absolute;left:1828px;top:1051px;" width="20" height="18" viewBox="0 0 20 18"><path d="M1.500 6.500 H4.500 L8.500 2.500 V15.500 L4.500 11.500 H1.500 Z" fill="none" stroke="#fff" stroke-width="1.100"/><path d="M11 6.500 C12.200 8 12.200 10 11 11.500 M13.200 4.500 C15.400 7 15.400 11 13.200 13.500 M15.500 2.500 C18.700 6 18.700 12 15.500 15.500" fill="none" stroke="#fff" stroke-width="1"/></svg>
<span style="position:absolute;top:1044.94px;font-size:12px;line-height:12px;white-space:pre;color:#fff;font-family:'Liberation Sans',sans-serif;left:1867.43px;transform-origin:50% 0;transform:scaleX(0.9952);">11:34</span>
<span style="position:absolute;top:1062.74px;font-size:12px;line-height:12px;white-space:pre;color:#fff;font-family:'Liberation Sans',sans-serif;left:1855.00px;transform-origin:0 0;transform:scaleX(0.9074);">23.08.2023</span>
<div style="position:absolute;left:1915px;top:1040px;width:1px;height:40px;background:#8a939c;"></div>
<!-- p07_menu.py -->
<div style="position:absolute;left:115.5px;top:43.5px;width:219.5px;height:370.5px;background:#f2f2f2;box-sizing:border-box;border:1px solid #ccc;border-left-color:#ececec;border-top-color:#e2e2e2;box-shadow:3px 3px 4px rgba(0,0,0,0.38);"></div>
<div style="position:absolute;left:146px;top:94.0px;width:185px;height:1px;background:#d4d4d4;"></div>
<div style="position:absolute;left:146px;top:257.0px;width:185px;height:1px;background:#d4d4d4;"></div>
<div style="position:absolute;left:146px;top:310.0px;width:185px;height:1px;background:#d4d4d4;"></div>
<div style="position:absolute;left:146px;top:385.0px;width:185px;height:1px;background:#d4d4d4;"></div>
<span style="position:absolute;top:52.44px;font-size:12px;line-height:12px;white-space:pre;color:#000;font-family:'Liberation Sans',sans-serif;left:150.00px;transform-origin:0 0;transform:scaleX(0.9858);">Symbolleisten...</span>
<div style="position:absolute;left:118px;top:68px;width:22px;height:22px;background:#91c9f7;"></div>
<svg style="position:absolute;left:118px;top:68px;" width="22" height="22" viewBox="0 0 22 22"><path d="M6 10.600 L9.500 14.200 L16 7" fill="none" stroke="#333" stroke-width="1.300"/></svg>
<span style="position:absolute;top:74.44px;font-size:12px;line-height:12px;white-space:pre;color:#000;font-family:'Liberation Sans',sans-serif;left:150.00px;transform-origin:0 0;transform:scaleX(0.9577);">Szenenregister</span>
<span style="position:absolute;top:105.44px;font-size:12px;line-height:12px;white-space:pre;color:#000;font-family:'Liberation Sans',sans-serif;left:150.00px;transform-origin:0 0;transform:scaleX(0.9898);">Ausgeblendete Geometrie</span>
<span style="position:absolute;top:127.44px;font-size:12px;line-height:12px;white-space:pre;color:#000;font-family:'Liberation Sans',sans-serif;left:150.00px;transform-origin:0 0;transform:scaleX(0.9939);">Ausgeblendete Objekte</span>
<span style="position:absolute;top:149.44px;font-size:12px;line-height:12px;white-space:pre;color:#000;font-family:'Liberation Sans',sans-serif;left:150.00px;transform-origin:0 0;">Schnittebenen</span>
<div style="position:absolute;left:118px;top:165px;width:22px;height:22px;background:#91c9f7;"></div>
<svg style="position:absolute;left:118px;top:165px;" width="22" height="22" viewBox="0 0 22 22"><path d="M6 10.600 L9.500 14.200 L16 7" fill="none" stroke="#333" stroke-width="1.300"/></svg>
<span style="position:absolute;top:171.44px;font-size:12px;line-height:12px;white-space:pre;color:#000;font-family:'Liberation Sans',sans-serif;left:150.00px;transform-origin:0 0;transform:scaleX(1.0148);">Schnitte</span>
<div style="position:absolute;left:118px;top:187px;width:22px;height:22px;background:#91c9f7;"></div>
<svg style="position:absolute;left:118px;top:187px;" width="22" height="22" viewBox="0 0 22 22"><path d="M6 10.600 L9.500 14.200 L16 7" fill="none" stroke="#333" stroke-width="1.300"/></svg>
<span style="position:absolute;top:193.44px;font-size:12px;line-height:12px;white-space:pre;color:#000;font-family:'Liberation Sans',sans-serif;left:150.00px;transform-origin:0 0;transform:scaleX(1.0290);">Schnitt füllen</span>
<div style="position:absolute;left:118px;top:209px;width:22px;height:22px;background:#91c9f7;"></div>
<svg style="position:absolute;left:118px;top:209px;" width="22" height="22" viewBox="0 0 22 22"><path d="M6 10.600 L9.500 14.200 L16 7" fill="none" stroke="#333" stroke-width="1.300"/></svg>
<span style="position:absolute;top:215.44px;font-size:12px;line-height:12px;white-space:pre;color:#000;font-family:'Liberation Sans',sans-serif;left:150.00px;transform-origin:0 0;transform:scaleX(0.9868);">Achsen</span>
<div style="position:absolute;left:118px;top:231px;width:22px;height:22px;background:#91c9f7;"></div>
<svg style="position:absolute;left:118px;top:231px;" width="22" height="22" viewBox="0 0 22 22"><path d="M6 10.600 L9.500 14.200 L16 7" fill="none" stroke="#333" stroke-width="1.300"/></svg>
<span style="position:absolute;top:237.44px;font-size:12px;line-height:12px;white-space:pre;color:#000;font-family:'Liberation Sans',sans-serif;left:150.00px;transform-origin:0 0;transform:scaleX(1.0130);">Führungen</span>
<span style="position:absolute;top:268.44px;font-size:12px;line-height:12px;white-space:pre;color:#000;font-family:'Liberation Sans',sans-serif;left:150.00px;transform-origin:0 0;transform:scaleX(0.9859);">Schatten</span>
<span style="position:absolute;top:290.44px;font-size:12px;line-height:12px;white-space:pre;color:#000;font-family:'Liberation Sans',sans-serif;left:150.00px;transform-origin:0 0;transform:scaleX(1.0046);">Nebel</span>
<span style="position:absolute;top:321.44px;font-size:12px;line-height:12px;white-space:pre;color:#000;font-family:'Liberation Sans',sans-serif;left:150.00px;transform-origin:0 0;">Kantenstil</span>
<svg style="position:absolute;left:316px;top:322.6px;" width="6" height="8" viewBox="0 0 6 8"><path d="M0.900 0.600 L4.100 3.900 L0.900 7.200" fill="none" stroke="#333" stroke-width="1"/></svg>
<span style="position:absolute;top:343.44px;font-size:12px;line-height:12px;white-space:pre;color:#000;font-family:'Liberation Sans',sans-serif;left:150.00px;transform-origin:0 0;transform:scaleX(0.9885);">Flächenstil</span>
<svg style="position:absolute;left:316px;top:344.6px;" width="6" height="8" viewBox="0 0 6 8"><path d="M0.900 0.600 L4.100 3.900 L0.900 7.200" fill="none" stroke="#333" stroke-width="1"/></svg>
<span style="position:absolute;top:365.44px;font-size:12px;line-height:12px;white-space:pre;color:#000;font-family:'Liberation Sans',sans-serif;left:150.00px;transform-origin:0 0;transform:scaleX(1.0180);">Komponentenbearbeitung</span>
<svg style="position:absolute;left:316px;top:366.6px;" width="6" height="8" viewBox="0 0 6 8"><path d="M0.900 0.600 L4.100 3.900 L0.900 7.200" fill="none" stroke="#333" stroke-width="1"/></svg>
<span style="position:absolute;top:396.44px;font-size:12px;line-height:12px;white-space:pre;color:#000;font-family:'Liberation Sans',sans-serif;left:150.00px;transform-origin:0 0;transform:scaleX(1.0569);">Animation</span>
<svg style="position:absolute;left:316px;top:397.6px;" width="6" height="8" viewBox="0 0 6 8"><path d="M0.900 0.600 L4.100 3.900 L0.900 7.200" fill="none" stroke="#333" stroke-width="1"/></svg>
</body></html>
